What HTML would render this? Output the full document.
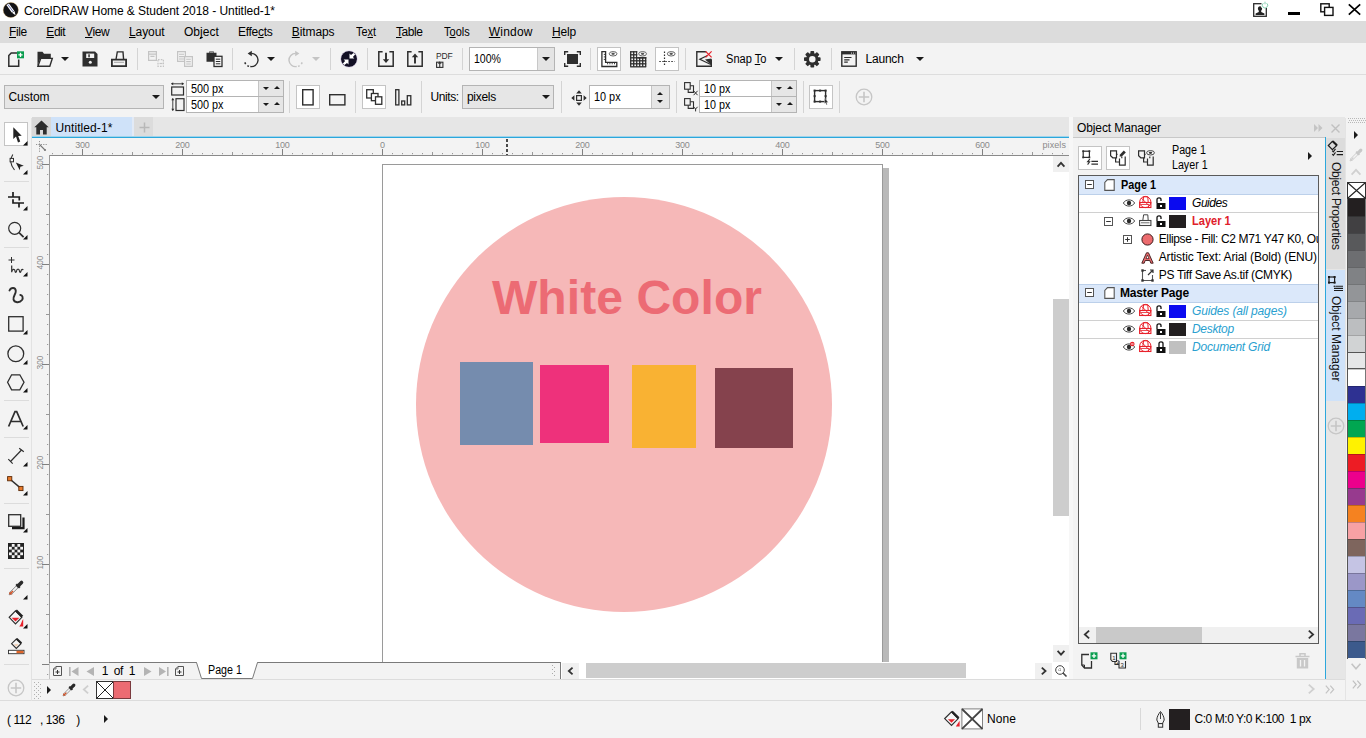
<!DOCTYPE html>
<html><head><meta charset="utf-8"><title>CorelDRAW Home &amp; Student 2018 - Untitled-1*</title>
<style>
html,body{margin:0;padding:0;}
body{width:1366px;height:738px;overflow:hidden;position:relative;background:#f3f3f3;font-family:"Liberation Sans",sans-serif;font-size:12px;color:#000;}
.a{position:absolute;display:block;}
.t{white-space:pre;}
u{text-decoration:underline;text-underline-offset:1px;text-decoration-skip-ink:none;}
svg{overflow:visible;}
</style></head><body>
<div class="a" style="left:0px;top:0px;width:1366px;height:21px;background:#ffffff;"></div>
<div class="a" style="left:0px;top:21px;width:1366px;height:22px;background:#dcdcdc;"></div>
<div class="a" style="left:0px;top:43px;width:1366px;height:32px;background:#f3f3f3;"></div>
<div class="a" style="left:0px;top:74px;width:1366px;height:1px;background:#dddddd;"></div>
<div class="a" style="left:0px;top:75px;width:1366px;height:42px;background:#f3f3f3;"></div>
<div class="a" style="left:0px;top:118px;width:32px;height:583px;background:#f3f3f3;"></div>
<div class="a" style="left:32px;top:117px;width:1041px;height:20px;background:#e6e6e6;"></div>
<div class="a" style="left:32px;top:117px;width:19px;height:20px;background:#d8d8d8;"></div>
<div class="a" style="left:51px;top:117px;width:81px;height:20px;background:#cfe2f9;"></div>
<div class="a" style="left:132px;top:117px;width:2px;height:20px;background:#e2eaf6;"></div>
<div class="a" style="left:134px;top:117px;width:19px;height:20px;background:#dcdcdc;"></div>
<div class="a" style="left:32px;top:136px;width:1037px;height:1px;background:#9fd3ea;"></div>
<div class="a" style="left:32px;top:137px;width:1037px;height:1px;background:#2ba7dc;"></div>
<div class="a" style="left:32px;top:138px;width:1037px;height:17px;background:#f3f3f3;"></div>
<div class="a" style="left:32px;top:155px;width:17px;height:524px;background:#f3f3f3;"></div>
<div class="a" style="left:49px;top:155px;width:1020px;height:507px;background:#ffffff;"></div>
<div class="a" style="left:49px;top:155px;width:1020px;height:1px;background:#8a8a8a;"></div>
<div class="a" style="left:49px;top:155px;width:1px;height:507px;background:#9a9a9a;"></div>
<div class="a" style="left:49px;top:662px;width:512px;height:1px;background:#7a7a7a;"></div>
<div class="a" style="left:560px;top:662px;width:1px;height:17px;background:#7a7a7a;"></div>
<div class="a" style="left:882px;top:168px;width:7px;height:494px;background:#b9b9b9;"></div>
<div class="a" style="left:382px;top:164px;width:501px;height:498px;background:#ffffff;border:1px solid #9a9a9a;box-sizing:border-box;border-bottom:none;"></div>
<div class="a" style="left:416px;top:197px;width:416px;height:415px;border-radius:50%;background:#f6b8b8;"></div>
<div class="a" style="left:460px;top:362px;width:73px;height:83px;background:#758cae;"></div>
<div class="a" style="left:540px;top:365px;width:69px;height:78px;background:#ee317b;"></div>
<div class="a" style="left:632px;top:365px;width:64px;height:83px;background:#f9b233;"></div>
<div class="a" style="left:715px;top:368px;width:78px;height:80px;background:#85424d;"></div>
<div class="a" style="left:1052px;top:156px;width:17px;height:507px;background:#ffffff;"></div>
<div class="a" style="left:1053px;top:156px;width:16px;height:16px;background:#f0f0f0;"></div>
<div class="a" style="left:1053px;top:299px;width:16px;height:217px;background:#cdcdcd;"></div>
<div class="a" style="left:1053px;top:645px;width:16px;height:17px;background:#f0f0f0;"></div>
<div class="a" style="left:50px;top:663px;width:510px;height:16px;background:#f3f3f3;"></div>
<div class="a" style="left:49px;top:663px;width:1px;height:16px;background:#c4c4c4;"></div>
<div class="a" style="left:561px;top:662px;width:508px;height:17px;background:#ffffff;"></div>
<div class="a" style="left:562px;top:663px;width:17px;height:16px;background:#f0f0f0;"></div>
<div class="a" style="left:1035px;top:663px;width:17px;height:16px;background:#f0f0f0;"></div>
<div class="a" style="left:586px;top:663px;width:380px;height:15px;background:#cdcdcd;"></div>
<div class="a" style="left:32px;top:679px;width:1313px;height:1px;background:#dcdcdc;"></div>
<div class="a" style="left:32px;top:680px;width:1313px;height:20px;background:#f3f3f3;"></div>
<div class="a" style="left:0px;top:700px;width:1366px;height:1px;background:#dcdcdc;"></div>
<div class="a" style="left:0px;top:701px;width:1366px;height:37px;background:#f3f3f3;"></div>
<div class="a" style="left:1069px;top:117px;width:4px;height:562px;background:#f7f7f7;"></div>
<div class="a" style="left:1073px;top:117px;width:272px;height:21px;background:#e6e6e6;"></div>
<div class="a" style="left:1073px;top:137px;width:252px;height:1px;background:#c8c8c8;"></div>
<div class="a" style="left:1073px;top:138px;width:252px;height:541px;background:#f3f3f3;"></div>
<div class="a" style="left:1325px;top:137px;width:1px;height:542px;background:#2ba7dc;"></div>
<div class="a" style="left:1326px;top:138px;width:19px;height:541px;background:#e6e6e6;"></div>
<div class="a" style="left:1326px;top:138px;width:19px;height:131px;background:#dcdcdc;"></div>
<div class="a" style="left:1326px;top:270px;width:19px;height:131px;background:#cfe2f9;"></div>
<div class="a" style="left:1345px;top:118px;width:1px;height:582px;background:#e4e4e4;"></div>
<div class="a" style="left:1346px;top:118px;width:20px;height:582px;background:#f3f3f3;"></div>
<div class="a" style="left:1078px;top:175px;width:241px;height:469px;background:#ffffff;border:1px solid #5a5a5a;box-sizing:border-box;"></div>
<div class="a" style="left:1079px;top:176px;width:239px;height:18px;background:#dbe8fa;"></div>
<div class="a" style="left:1079px;top:284px;width:239px;height:18px;background:#dbe8fa;"></div>
<div class="a" style="left:1079px;top:194px;width:239px;height:1px;background:#d0d0d0;"></div>
<div class="a" style="left:1079px;top:212px;width:239px;height:1px;background:#d0d0d0;"></div>
<div class="a" style="left:1079px;top:302px;width:239px;height:1px;background:#d0d0d0;"></div>
<div class="a" style="left:1079px;top:320px;width:239px;height:1px;background:#d0d0d0;"></div>
<div class="a" style="left:1079px;top:338px;width:239px;height:1px;background:#d0d0d0;"></div>
<div class="a" style="left:1079px;top:194px;width:239px;height:1px;background:#bcd0ea;"></div>
<div class="a" style="left:1079px;top:284px;width:239px;height:1px;background:#bcd0ea;"></div>
<div class="a" style="left:1079px;top:302px;width:239px;height:1px;background:#bcd0ea;"></div>
<div class="a" style="left:1079px;top:627px;width:239px;height:16px;background:#f0f0f0;"></div>
<div class="a" style="left:1096px;top:627px;width:106px;height:16px;background:#c9c9c9;"></div>
<div class="a" style="left:1347px;top:182px;width:19px;height:17px;background:#ffffff;border:1px solid #333;box-sizing:border-box;"></div>
<div class="a" style="left:1348px;top:199px;width:17px;height:17px;background:#231f20;"></div>
<div class="a" style="left:1348px;top:216px;width:17px;height:17px;background:#414042;"></div>
<div class="a" style="left:1348px;top:216px;width:17px;height:1px;background:rgba(0,0,0,0.220);"></div>
<div class="a" style="left:1348px;top:233px;width:17px;height:17px;background:#58595b;"></div>
<div class="a" style="left:1348px;top:233px;width:17px;height:1px;background:rgba(0,0,0,0.220);"></div>
<div class="a" style="left:1348px;top:250px;width:17px;height:17px;background:#6d6e71;"></div>
<div class="a" style="left:1348px;top:250px;width:17px;height:1px;background:rgba(0,0,0,0.220);"></div>
<div class="a" style="left:1348px;top:267px;width:17px;height:17px;background:#808285;"></div>
<div class="a" style="left:1348px;top:267px;width:17px;height:1px;background:rgba(0,0,0,0.220);"></div>
<div class="a" style="left:1348px;top:284px;width:17px;height:17px;background:#939598;"></div>
<div class="a" style="left:1348px;top:284px;width:17px;height:1px;background:rgba(0,0,0,0.220);"></div>
<div class="a" style="left:1348px;top:301px;width:17px;height:17px;background:#a7a9ac;"></div>
<div class="a" style="left:1348px;top:301px;width:17px;height:1px;background:rgba(0,0,0,0.220);"></div>
<div class="a" style="left:1348px;top:318px;width:17px;height:17px;background:#bcbec0;"></div>
<div class="a" style="left:1348px;top:318px;width:17px;height:1px;background:rgba(0,0,0,0.220);"></div>
<div class="a" style="left:1348px;top:335px;width:17px;height:17px;background:#d1d3d4;"></div>
<div class="a" style="left:1348px;top:335px;width:17px;height:1px;background:rgba(0,0,0,0.220);"></div>
<div class="a" style="left:1348px;top:352px;width:17px;height:17px;background:#e6e7e8;"></div>
<div class="a" style="left:1348px;top:352px;width:17px;height:1px;background:rgba(0,0,0,0.220);"></div>
<div class="a" style="left:1348px;top:369px;width:17px;height:17px;background:#ffffff;"></div>
<div class="a" style="left:1348px;top:369px;width:17px;height:1px;background:rgba(0,0,0,0.220);"></div>
<div class="a" style="left:1348px;top:386px;width:17px;height:17px;background:#2e3192;"></div>
<div class="a" style="left:1348px;top:386px;width:17px;height:1px;background:rgba(0,0,0,0.220);"></div>
<div class="a" style="left:1348px;top:403px;width:17px;height:17px;background:#00aeef;"></div>
<div class="a" style="left:1348px;top:403px;width:17px;height:1px;background:rgba(0,0,0,0.220);"></div>
<div class="a" style="left:1348px;top:420px;width:17px;height:17px;background:#00a651;"></div>
<div class="a" style="left:1348px;top:420px;width:17px;height:1px;background:rgba(0,0,0,0.220);"></div>
<div class="a" style="left:1348px;top:437px;width:17px;height:17px;background:#fff200;"></div>
<div class="a" style="left:1348px;top:437px;width:17px;height:1px;background:rgba(0,0,0,0.220);"></div>
<div class="a" style="left:1348px;top:454px;width:17px;height:17px;background:#ed1c24;"></div>
<div class="a" style="left:1348px;top:454px;width:17px;height:1px;background:rgba(0,0,0,0.220);"></div>
<div class="a" style="left:1348px;top:471px;width:17px;height:17px;background:#ec008c;"></div>
<div class="a" style="left:1348px;top:471px;width:17px;height:1px;background:rgba(0,0,0,0.220);"></div>
<div class="a" style="left:1348px;top:488px;width:17px;height:17px;background:#973a8e;"></div>
<div class="a" style="left:1348px;top:488px;width:17px;height:1px;background:rgba(0,0,0,0.220);"></div>
<div class="a" style="left:1348px;top:505px;width:17px;height:17px;background:#f58220;"></div>
<div class="a" style="left:1348px;top:505px;width:17px;height:1px;background:rgba(0,0,0,0.220);"></div>
<div class="a" style="left:1348px;top:522px;width:17px;height:17px;background:#f7a1a4;"></div>
<div class="a" style="left:1348px;top:522px;width:17px;height:1px;background:rgba(0,0,0,0.220);"></div>
<div class="a" style="left:1348px;top:539px;width:17px;height:17px;background:#7e655d;"></div>
<div class="a" style="left:1348px;top:539px;width:17px;height:1px;background:rgba(0,0,0,0.220);"></div>
<div class="a" style="left:1348px;top:556px;width:17px;height:17px;background:#c5c4e4;"></div>
<div class="a" style="left:1348px;top:556px;width:17px;height:1px;background:rgba(0,0,0,0.220);"></div>
<div class="a" style="left:1348px;top:573px;width:17px;height:17px;background:#9b97c8;"></div>
<div class="a" style="left:1348px;top:573px;width:17px;height:1px;background:rgba(0,0,0,0.220);"></div>
<div class="a" style="left:1348px;top:590px;width:17px;height:17px;background:#6489c4;"></div>
<div class="a" style="left:1348px;top:590px;width:17px;height:1px;background:rgba(0,0,0,0.220);"></div>
<div class="a" style="left:1348px;top:607px;width:17px;height:17px;background:#6a6bb5;"></div>
<div class="a" style="left:1348px;top:607px;width:17px;height:1px;background:rgba(0,0,0,0.220);"></div>
<div class="a" style="left:1348px;top:624px;width:17px;height:17px;background:#7a779f;"></div>
<div class="a" style="left:1348px;top:624px;width:17px;height:1px;background:rgba(0,0,0,0.220);"></div>
<div class="a" style="left:1348px;top:641px;width:17px;height:17px;background:#3c5a8c;"></div>
<div class="a" style="left:1348px;top:641px;width:17px;height:1px;background:rgba(0,0,0,0.220);"></div>
<div class="a" style="left:1347px;top:352px;width:19px;height:17px;background:#e6e7e8;border:1px solid #555;box-sizing:border-box;"></div>
<div class="a" style="left:1347px;top:199px;width:1px;height:460px;background:#555;"></div>
<div class="a" style="left:1365px;top:199px;width:1px;height:460px;background:#777;"></div>
<svg class="a" style="left:3px;top:2px;" width="16" height="16" viewBox="0 0 16 16"><circle cx="7.800" cy="8" r="7.600" fill="#131316"/><circle cx="7.800" cy="8" r="7.600" fill="none" stroke="#d8a040" stroke-width="0.500" opacity="0.600"/><path d="M3.400,2.900L5.900,1.500L11.200,8.700L8.700,10.400Z" fill="#ffffff"/><path d="M9,10.800L11.500,9.100L12.600,13.300Z" fill="#ffffff"/><path d="M4.800,2.400L10,9.500" stroke="#4a55a0" stroke-width="0.800"/></svg>
<svg class="a" style="left:1253px;top:3px;" width="16" height="15" viewBox="0 0 16 15"><rect x="0.7" y="0.7" width="12.6" height="12.6" fill="#fff" stroke="#2a2a2a" stroke-width="1.3"/><path d="M7,3.2c1.3,0,2.1,1,2.1,2.3c0,1-0.5,1.8-0.9,2.3v1.2l3.2,1.4v1.6H2.6v-1.6l3.2-1.4V7.8C5.4,7.3,4.9,6.500,4.9,5.500C4.9,4.200,5.700,3.200,7,3.200Z" fill="#222"/><rect x="8.5" y="-1.5" width="7" height="6.5" fill="#fff"/><path d="M10.3,0.2a2.7,2.7,0,1,0,3.400,0" fill="none" stroke="#7ac9a8" stroke-width="0.9"/><path d="M12,-1.3v2.600" stroke="#7ac9a8" stroke-width="0.9"/></svg>
<div class="a" style="left:1288px;top:11.5px;width:11.5px;height:3.3px;background:#000;"></div>
<svg class="a" style="left:1320px;top:3px;" width="14" height="14" viewBox="0 0 14 14"><rect x="0.8" y="0.8" width="8.4" height="8" fill="#fff" stroke="#111" stroke-width="1.4"/><rect x="4.600" y="4.400" width="8.400" height="8" fill="#fff" stroke="#111" stroke-width="1.4"/></svg>
<svg class="a" style="left:1348px;top:4px;" width="13" height="11" viewBox="0 0 13 11"><path d="M0.8,0.3L12.2,10.7M12.2,0.3L0.8,10.7" stroke="#000" stroke-width="1.7"/></svg>
<svg class="a" style="left:8px;top:51px;" width="16" height="16" viewBox="0 0 16 16"><path d="M9,2H3.200L0.800,4.600V15.200H10.700V8.500" fill="none" stroke="#2e2e2e" stroke-width="1.5"/><rect x="9" y="0.3" width="7" height="7" fill="#0a9d4f"/><path d="M10.4,3.800h4.200M12.500,1.700v4.200" stroke="#fff" stroke-width="1.3"/></svg>
<svg class="a" style="left:37px;top:51px;" width="16" height="16" viewBox="0 0 16 16"><path d="M0.500,0.800H5.500L7,2.800H13.800V7H3.400L0.500,15Z" fill="#2e2e2e"/><path d="M3.700,7.400H15.300L12.800,15.200H0.900Z" fill="#f3f3f3" stroke="#2e2e2e" stroke-width="1.400"/></svg>
<svg class="a" style="left:61px;top:57px;" width="8" height="4" viewBox="0 0 8 4"><path d="M0,0H8L4.0,4Z" fill="#1a1a1a"/></svg>
<svg class="a" style="left:82px;top:51px;" width="16" height="16" viewBox="0 0 16 16"><path d="M0.500,0.500H13L15.500,3V15.500H0.500Z" fill="#2e2e2e"/><rect x="4.200" y="2.600" width="8" height="4.400" fill="#f3f3f3"/><rect x="6.300" y="3.300" width="1.500" height="3" fill="#2e2e2e"/><circle cx="8.300" cy="11.300" r="1.500" fill="#f3f3f3"/></svg>
<svg class="a" style="left:111px;top:51px;" width="16" height="16" viewBox="0 0 16 16"><path d="M5,8.500L6.300,0.900H12L12.600,8.500" fill="none" stroke="#2e2e2e" stroke-width="1.400"/><path d="M0.900,8.700H15.100V15.100H0.900Z" fill="none" stroke="#2e2e2e" stroke-width="1.800"/><path d="M3,11.300H13" stroke="#2e2e2e" stroke-width="0.800" opacity="0.500"/></svg>
<div class="a" style="left:137px;top:48px;width:1px;height:22px;background:#d4d4d4;"></div>
<svg class="a" style="left:148px;top:51px;" width="16" height="16" viewBox="0 0 16 16"><path d="M0.600,0.600H8.400V9.400H0.600ZM0.600,3.200H8.400M2.400,5.400H6.500" fill="none" stroke="#c4c4c4" stroke-width="1.200"/><path d="M10,8.600H15.400V15.400H10Z" fill="none" stroke="#c4c4c4" stroke-width="1.200" stroke-dasharray="1.600,1.200"/><path d="M11.500,12.500h3" stroke="#c4c4c4" stroke-width="1.200"/></svg>
<svg class="a" style="left:177px;top:51px;" width="16" height="16" viewBox="0 0 16 16"><path d="M0.600,0.600H8.400V10.400H0.600Z" fill="#f3f3f3" stroke="#c4c4c4" stroke-width="1.200"/><path d="M2,3.200h5M2,5.600h5M2,8h5" stroke="#c4c4c4" stroke-width="1.100"/><path d="M7.600,5.600H15.400V15.400H7.600Z" fill="#f3f3f3" stroke="#c4c4c4" stroke-width="1.200"/><path d="M9.200,8.200h4.600M9.200,10.600h4.600M9.200,13h4.600" stroke="#c4c4c4" stroke-width="1.100"/></svg>
<svg class="a" style="left:206px;top:51px;" width="16" height="16" viewBox="0 0 16 16"><path d="M0.500,1.800H3.200V0.400H7.800V1.800H10.500V10.800H0.500Z" fill="#2e2e2e"/><rect x="3.600" y="0.700" width="3.800" height="1.300" fill="#8a8a8a"/><rect x="8" y="5.300" width="8" height="10.200" fill="#f6f6f6" stroke="#2e2e2e" stroke-width="1.300"/><path d="M9.800,8.200h4.500M9.800,10.500h4.500M9.800,12.800h4.500" stroke="#2e2e2e" stroke-width="1"/></svg>
<div class="a" style="left:232px;top:48px;width:1px;height:22px;background:#d4d4d4;"></div>
<svg class="a" style="left:243px;top:51px;" width="16" height="16" viewBox="0 0 16 16"><g><path d="M8.200,2.400A6.600,6.600,0,1,1,7.300,15.500" fill="none" stroke="#2e2e2e" stroke-width="1.400"/><path d="M8.800,-0.300V5.300L4.600,2.500Z" fill="#2e2e2e"/><path d="M6,15.300A6.600,6.600,0,0,1,1.400,9.300" fill="none" stroke="#2e2e2e" stroke-width="1.500" stroke-dasharray="1.800,2.200"/></g></svg>
<svg class="a" style="left:267px;top:57px;" width="8" height="4" viewBox="0 0 8 4"><path d="M0,0H8L4.0,4Z" fill="#1a1a1a"/></svg>
<svg class="a" style="left:288px;top:51px;" width="16" height="16" viewBox="0 0 16 16"><g transform="translate(16,0) scale(-1,1)"><path d="M8.200,2.400A6.600,6.600,0,1,1,7.300,15.500" fill="none" stroke="#c4c4c4" stroke-width="1.400"/><path d="M8.800,-0.300V5.300L4.600,2.500Z" fill="#c4c4c4"/><path d="M6,15.300A6.600,6.600,0,0,1,1.400,9.300" fill="none" stroke="#c4c4c4" stroke-width="1.500" stroke-dasharray="1.800,2.200"/></g></svg>
<svg class="a" style="left:312px;top:57px;" width="8" height="4" viewBox="0 0 8 4"><path d="M0,0H8L4.0,4Z" fill="#c4c4c4"/></svg>
<div class="a" style="left:330px;top:48px;width:1px;height:22px;background:#d4d4d4;"></div>
<svg class="a" style="left:341px;top:51px;" width="17" height="17" viewBox="0 0 17 17"><circle cx="8" cy="8" r="8.100" fill="#120f24"/><circle cx="8" cy="8" r="8.300" fill="none" stroke="#c9b8e0" stroke-width="0.600" opacity="0.700"/><path d="M8.500,7.500V2.600L10,4.100L12.600,1.900L14.100,3.400L11.900,6L13.400,7.500Z" fill="#fff"/><path d="M7.500,8.500V13.400L6,11.900L3.400,14.100L1.900,12.600L4.100,10L2.600,8.500Z" fill="#fff"/></svg>
<div class="a" style="left:367px;top:48px;width:1px;height:22px;background:#d4d4d4;"></div>
<svg class="a" style="left:378px;top:51px;" width="16" height="16" viewBox="0 0 16 16"><path d="M4.600,0.800H0.800V15.200H15.200V0.800H11.400" fill="none" stroke="#2e2e2e" stroke-width="1.500"/><path d="M8,1.800V9.500" stroke="#2e2e2e" stroke-width="1.900"/><path d="M4.800,8.300H11.200L8,12Z" fill="#2e2e2e"/></svg>
<svg class="a" style="left:407px;top:51px;" width="16" height="16" viewBox="0 0 16 16"><path d="M4.600,0.800H0.800V15.200H15.200V0.800H11.400" fill="none" stroke="#2e2e2e" stroke-width="1.500"/><path d="M8,12.500V5" stroke="#2e2e2e" stroke-width="1.900"/><path d="M4.800,6.200H11.200L8,2.400Z" fill="#2e2e2e"/></svg>
<svg class="a" style="left:436px;top:60px;" width="8" height="8" viewBox="0 0 8 8"><rect x="0.600" y="2.200" width="6.300" height="5.200" fill="none" stroke="#2e2e2e" stroke-width="1.100"/><path d="M3.750,7V3.200" stroke="#2e2e2e" stroke-width="1.100"/><path d="M1.900,3.700H5.600L3.750,1.200Z" fill="#2e2e2e"/></svg>
<div class="a" style="left:462px;top:48px;width:1px;height:22px;background:#d4d4d4;"></div>
<div class="a" style="left:469px;top:47px;width:86px;height:24px;background:#ffffff;border:1px solid #b4b4b4;box-sizing:border-box;"></div>
<div class="a" style="left:537px;top:48px;width:17px;height:22px;background:#e4e4e4;"></div>
<div class="a" style="left:537px;top:48px;width:1px;height:22px;background:#c8c8c8;"></div>
<svg class="a" style="left:542px;top:57px;" width="8" height="4" viewBox="0 0 8 4"><path d="M0,0H8L4.0,4Z" fill="#1a1a1a"/></svg>
<svg class="a" style="left:564px;top:51px;" width="17" height="16" viewBox="0 0 17 16"><rect x="3" y="3" width="11" height="10" fill="#2e2e2e"/><path d="M0.700,4V0.700H4.200M12.800,0.700H16.300V4M16.300,12V15.300H12.800M4.200,15.300H0.700V12" fill="none" stroke="#2e2e2e" stroke-width="1.400"/></svg>
<div class="a" style="left:590px;top:48px;width:1px;height:22px;background:#d4d4d4;"></div>
<div class="a" style="left:597px;top:47px;width:24px;height:24px;background:#ffffff;border:1px solid #c4c4c4;box-sizing:border-box;"></div>
<svg class="a" style="left:601px;top:51px;" width="17" height="16" viewBox="0 0 17 16"><path d="M0.900,0.700H4.600V11.400H15.800V15.500H0.900Z" fill="#fff" stroke="#2e2e2e" stroke-width="1.300"/><path d="M2.800,3.400h1.800M2.800,5.900h1.800M2.800,8.400h1.800M6.600,11.400v1.900M8.900,11.400v1.900M11.200,11.400v1.900M13.500,11.400v1.900" stroke="#2e2e2e" stroke-width="0.900"/><ellipse cx="12.1" cy="2.8" rx="3.900" ry="2.200" fill="#fafafa" stroke="#555" stroke-width="0.9"/><ellipse cx="12.1" cy="2.8" rx="1.700" ry="1.100" fill="#555"/></svg>
<svg class="a" style="left:630px;top:51px;" width="17" height="16" viewBox="0 0 17 16"><path d="M0.7,0.200V15.800" stroke="#2e2e2e" stroke-width="1.300"/><path d="M3.7,0.200V15.800" stroke="#2e2e2e" stroke-width="1.300"/><path d="M6.7,0.200V15.800" stroke="#2e2e2e" stroke-width="1.300"/><path d="M9.7,0.200V15.800" stroke="#2e2e2e" stroke-width="1.300"/><path d="M12.7,0.200V15.800" stroke="#2e2e2e" stroke-width="1.300"/><path d="M15.7,0.200V15.800" stroke="#2e2e2e" stroke-width="1.300"/><path d="M0.200,0.8H16.200" stroke="#2e2e2e" stroke-width="1.300"/><path d="M0.200,3.8H16.200" stroke="#2e2e2e" stroke-width="1.300"/><path d="M0.200,6.8H16.200" stroke="#2e2e2e" stroke-width="1.300"/><path d="M0.200,9.8H16.200" stroke="#2e2e2e" stroke-width="1.300"/><path d="M0.200,12.8H16.200" stroke="#2e2e2e" stroke-width="1.300"/><path d="M0.200,15.8H16.200" stroke="#2e2e2e" stroke-width="1.300"/><rect x="7.400" y="-0.500" width="10" height="6.600" fill="#f3f3f3"/><path d="M7.400,6.800H16.200" stroke="#2e2e2e" stroke-width="1.300"/><ellipse cx="12.6" cy="2.8" rx="3.900" ry="2.200" fill="#fafafa" stroke="#555" stroke-width="0.9"/><ellipse cx="12.6" cy="2.8" rx="1.700" ry="1.100" fill="#555"/></svg>
<div class="a" style="left:655px;top:47px;width:24px;height:24px;background:#ffffff;border:1px solid #c4c4c4;box-sizing:border-box;"></div>
<svg class="a" style="left:659px;top:51px;" width="17" height="16" viewBox="0 0 17 16"><path d="M5.500,0.500V15.500" stroke="#2e2e2e" stroke-width="1.200" stroke-dasharray="1.500,1.500"/><path d="M0.300,10.500H15.700" stroke="#2e2e2e" stroke-width="1.200" stroke-dasharray="1.500,1.500"/><ellipse cx="12.2" cy="2.8" rx="3.900" ry="2.200" fill="#fafafa" stroke="#555" stroke-width="0.9"/><ellipse cx="12.2" cy="2.8" rx="1.700" ry="1.100" fill="#555"/></svg>
<div class="a" style="left:685px;top:48px;width:1px;height:22px;background:#d4d4d4;"></div>
<svg class="a" style="left:696px;top:51px;" width="17" height="16" viewBox="0 0 17 16"><path d="M10.300,0.800H0.800V15.200H15.300V8.200" fill="none" stroke="#2e2e2e" stroke-width="1.400"/><path d="M11.500,4.500L3.800,8.300L14.800,13.500" fill="none" stroke="#2e2e2e" stroke-width="1.200"/><path d="M9,8.600L15.300,7.600V14Z" fill="#2e2e2e"/><path d="M9.600,0.300L15.600,6.300M15.600,0.300L9.600,6.300" stroke="#e8212b" stroke-width="1.200"/></svg>
<svg class="a" style="left:775px;top:57px;" width="8" height="4" viewBox="0 0 8 4"><path d="M0,0H8L4.0,4Z" fill="#1a1a1a"/></svg>
<div class="a" style="left:794px;top:48px;width:1px;height:22px;background:#d4d4d4;"></div>
<svg class="a" style="left:804px;top:51px;" width="17" height="17" viewBox="0 0 17 17"><g transform="translate(8.300,8.200)"><rect x="-1.900" y="-8.300" width="3.800" height="4" rx="0.800" fill="#2e2e2e" transform="rotate(0)"/><rect x="-1.900" y="-8.300" width="3.800" height="4" rx="0.800" fill="#2e2e2e" transform="rotate(45)"/><rect x="-1.900" y="-8.300" width="3.800" height="4" rx="0.800" fill="#2e2e2e" transform="rotate(90)"/><rect x="-1.900" y="-8.300" width="3.800" height="4" rx="0.800" fill="#2e2e2e" transform="rotate(135)"/><rect x="-1.900" y="-8.300" width="3.800" height="4" rx="0.800" fill="#2e2e2e" transform="rotate(180)"/><rect x="-1.900" y="-8.300" width="3.800" height="4" rx="0.800" fill="#2e2e2e" transform="rotate(225)"/><rect x="-1.900" y="-8.300" width="3.800" height="4" rx="0.800" fill="#2e2e2e" transform="rotate(270)"/><rect x="-1.900" y="-8.300" width="3.800" height="4" rx="0.800" fill="#2e2e2e" transform="rotate(315)"/><circle r="4.700" fill="none" stroke="#2e2e2e" stroke-width="2.900"/></g></svg>
<div class="a" style="left:831px;top:48px;width:1px;height:22px;background:#d4d4d4;"></div>
<svg class="a" style="left:841px;top:51px;" width="16" height="16" viewBox="0 0 16 16"><rect x="0.800" y="0.800" width="14.400" height="14.400" fill="#f3f3f3" stroke="#2e2e2e" stroke-width="1.400"/><rect x="0.800" y="0.800" width="14.400" height="2.600" fill="#2e2e2e"/><path d="M10,2.100h1M12,2.100h1M14,2.100h0.500" stroke="#fff" stroke-width="0.900"/><path d="M3.200,6.500h7.300M3.200,8.800h5.300M3.200,11.100h3.600" stroke="#2e2e2e" stroke-width="1.200"/></svg>
<svg class="a" style="left:916px;top:57px;" width="8" height="4" viewBox="0 0 8 4"><path d="M0,0H8L4.0,4Z" fill="#1a1a1a"/></svg>
<div class="a" style="left:4px;top:85px;width:160px;height:24px;background:#e6e6e6;border:1px solid #b4b4b4;box-sizing:border-box;"></div>
<svg class="a" style="left:152px;top:95px;" width="8" height="4" viewBox="0 0 8 4"><path d="M0,0H8L4.0,4Z" fill="#1a1a1a"/></svg>
<svg class="a" style="left:171px;top:82px;" width="14" height="14" viewBox="0 0 14 14"><path d="M0.500,1.800H12.500" stroke="#2e2e2e" stroke-width="0.9"/><path d="M0,1.800L2.200,0.300V3.300ZM13,1.800L10.800,0.300V3.300Z" fill="#2e2e2e"/><rect x="0.700" y="5" width="11.800" height="8" fill="none" stroke="#2e2e2e" stroke-width="1.200"/></svg>
<svg class="a" style="left:171px;top:98px;" width="14" height="14" viewBox="0 0 14 14"><path d="M1.800,0.500V12.500" stroke="#2e2e2e" stroke-width="0.9"/><path d="M1.800,0L0.300,2.200H3.300ZM1.800,13L0.300,10.800H3.300Z" fill="#2e2e2e"/><rect x="5" y="0.700" width="8" height="11.800" fill="none" stroke="#2e2e2e" stroke-width="1.200"/></svg>
<div class="a" style="left:186px;top:80px;width:97.5px;height:33px;background:#ffffff;border:1px solid #b4b4b4;box-sizing:border-box;"></div>
<div class="a" style="left:258px;top:81px;width:24.5px;height:31px;background:#e6e6e6;"></div>
<div class="a" style="left:258px;top:81px;width:1px;height:31px;background:#c4c4c4;"></div>
<div class="a" style="left:187px;top:96px;width:95.5px;height:1px;background:#b4b4b4;"></div>
<svg class="a" style="left:263px;top:87px;" width="6" height="3" viewBox="0 0 6 3"><path d="M0,0H6L3.0,3Z" fill="#1a1a1a"/></svg>
<svg class="a" style="left:274px;top:86px;" width="6" height="3" viewBox="0 0 6 3"><path d="M0,3H6L3.0,0Z" fill="#1a1a1a"/></svg>
<svg class="a" style="left:263px;top:103px;" width="6" height="3" viewBox="0 0 6 3"><path d="M0,0H6L3.0,3Z" fill="#1a1a1a"/></svg>
<svg class="a" style="left:274px;top:102px;" width="6" height="3" viewBox="0 0 6 3"><path d="M0,3H6L3.0,0Z" fill="#1a1a1a"/></svg>
<div class="a" style="left:289px;top:81px;width:1px;height:32px;background:#d4d4d4;"></div>
<div class="a" style="left:296px;top:85px;width:24px;height:24px;background:#ffffff;border:1px solid #c4c4c4;box-sizing:border-box;"></div>
<svg class="a" style="left:302px;top:89px;" width="12" height="17" viewBox="0 0 12 17"><rect x="0.700" y="0.700" width="10.400" height="15.200" fill="none" stroke="#2e2e2e" stroke-width="1.400"/></svg>
<svg class="a" style="left:329px;top:94px;" width="17" height="12" viewBox="0 0 17 12"><rect x="0.700" y="0.700" width="15.200" height="10.200" fill="none" stroke="#2e2e2e" stroke-width="1.400"/></svg>
<div class="a" style="left:355px;top:81px;width:1px;height:32px;background:#d4d4d4;"></div>
<div class="a" style="left:362px;top:85px;width:24px;height:24px;background:#ffffff;border:1px solid #c4c4c4;box-sizing:border-box;"></div>
<svg class="a" style="left:366px;top:89px;" width="17" height="17" viewBox="0 0 17 17"><rect x="0.700" y="0.700" width="6.600" height="8.300" fill="none" stroke="#2e2e2e" stroke-width="1.300"/><rect x="5.400" y="4.500" width="6.600" height="7.200" fill="#fff" stroke="#2e2e2e" stroke-width="1.300"/><rect x="9.500" y="7.800" width="6.300" height="7.500" fill="#fff" stroke="#2e2e2e" stroke-width="1.300"/></svg>
<svg class="a" style="left:395px;top:89px;" width="17" height="17" viewBox="0 0 17 17"><rect x="0.700" y="0.700" width="3.200" height="15.200" fill="none" stroke="#2e2e2e" stroke-width="1.300"/><rect x="6.700" y="12" width="3" height="3.900" fill="none" stroke="#2e2e2e" stroke-width="1.300"/><rect x="12.300" y="6.700" width="3.500" height="9.200" fill="none" stroke="#2e2e2e" stroke-width="1.300"/></svg>
<div class="a" style="left:421px;top:81px;width:1px;height:32px;background:#d4d4d4;"></div>
<div class="a" style="left:462px;top:85px;width:92px;height:24px;background:#e6e6e6;border:1px solid #b4b4b4;box-sizing:border-box;"></div>
<svg class="a" style="left:542px;top:95px;" width="8" height="4" viewBox="0 0 8 4"><path d="M0,0H8L4.0,4Z" fill="#1a1a1a"/></svg>
<div class="a" style="left:561px;top:81px;width:1px;height:32px;background:#d4d4d4;"></div>
<svg class="a" style="left:571px;top:90px;" width="16" height="16" viewBox="0 0 16 16"><rect x="5.600" y="5.600" width="4.800" height="4.800" fill="none" stroke="#2e2e2e" stroke-width="1.200"/><path d="M8,0.300L5.200,3.400H10.800ZM8,15.700L5.200,12.600H10.800ZM0.300,8L3.400,5.200V10.800ZM15.700,8L12.600,5.200V10.800Z" fill="#2e2e2e"/></svg>
<div class="a" style="left:589px;top:85px;width:81px;height:24px;background:#ffffff;border:1px solid #b4b4b4;box-sizing:border-box;"></div>
<div class="a" style="left:651px;top:86px;width:18px;height:22px;background:#e6e6e6;"></div>
<div class="a" style="left:651px;top:86px;width:1px;height:22px;background:#c4c4c4;"></div>
<svg class="a" style="left:657px;top:92px;" width="6" height="3" viewBox="0 0 6 3"><path d="M0,3H6L3.0,0Z" fill="#1a1a1a"/></svg>
<svg class="a" style="left:657px;top:100px;" width="6" height="3" viewBox="0 0 6 3"><path d="M0,0H6L3.0,3Z" fill="#1a1a1a"/></svg>
<div class="a" style="left:676px;top:81px;width:1px;height:32px;background:#d4d4d4;"></div>
<svg class="a" style="left:684px;top:82px;" width="14" height="14" viewBox="0 0 14 14"><rect x="0.600" y="0.600" width="5.600" height="6.600" fill="none" stroke="#2e2e2e" stroke-width="1.100"/><path d="M4.200,7.200V10.400H9.500V3.800H6.200" fill="none" stroke="#2e2e2e" stroke-width="1.100"/><path d="M9.600,8.800L13.600,13.200M13.600,8.800L9.600,13.200" stroke="#2e2e2e" stroke-width="1"/></svg>
<svg class="a" style="left:684px;top:98px;" width="14" height="14" viewBox="0 0 14 14"><rect x="0.600" y="0.600" width="5.600" height="6.600" fill="none" stroke="#2e2e2e" stroke-width="1.100"/><path d="M4.200,7.200V10.400H9.500V3.800H6.200" fill="none" stroke="#2e2e2e" stroke-width="1.100"/><path d="M9.600,8.800L11.600,11L13.600,8.800M11.600,11V13.400" stroke="#2e2e2e" stroke-width="1" fill="none"/></svg>
<div class="a" style="left:699px;top:80px;width:97.5px;height:33px;background:#ffffff;border:1px solid #b4b4b4;box-sizing:border-box;"></div>
<div class="a" style="left:771px;top:81px;width:24.5px;height:31px;background:#e6e6e6;"></div>
<div class="a" style="left:771px;top:81px;width:1px;height:31px;background:#c4c4c4;"></div>
<div class="a" style="left:700px;top:96px;width:95.5px;height:1px;background:#b4b4b4;"></div>
<svg class="a" style="left:776px;top:87px;" width="6" height="3" viewBox="0 0 6 3"><path d="M0,0H6L3.0,3Z" fill="#1a1a1a"/></svg>
<svg class="a" style="left:787px;top:86px;" width="6" height="3" viewBox="0 0 6 3"><path d="M0,3H6L3.0,0Z" fill="#1a1a1a"/></svg>
<svg class="a" style="left:776px;top:103px;" width="6" height="3" viewBox="0 0 6 3"><path d="M0,0H6L3.0,3Z" fill="#1a1a1a"/></svg>
<svg class="a" style="left:787px;top:102px;" width="6" height="3" viewBox="0 0 6 3"><path d="M0,3H6L3.0,0Z" fill="#1a1a1a"/></svg>
<div class="a" style="left:803px;top:81px;width:1px;height:32px;background:#d4d4d4;"></div>
<div class="a" style="left:809px;top:85px;width:24px;height:24px;background:#ffffff;border:1px solid #c4c4c4;box-sizing:border-box;"></div>
<svg class="a" style="left:813px;top:89px;" width="17" height="17" viewBox="0 0 17 17"><rect x="1.600" y="1.600" width="11" height="11" fill="none" stroke="#2e2e2e" stroke-width="1.400"/><rect x="0.6000000000000001" y="0.6000000000000001" width="2" height="2" fill="#2e2e2e"/><rect x="0.6000000000000001" y="6.1" width="2" height="2" fill="#2e2e2e"/><rect x="0.6000000000000001" y="11.6" width="2" height="2" fill="#2e2e2e"/><rect x="6.1" y="0.6000000000000001" width="2" height="2" fill="#2e2e2e"/><rect x="6.1" y="11.6" width="2" height="2" fill="#2e2e2e"/><rect x="11.6" y="0.6000000000000001" width="2" height="2" fill="#2e2e2e"/><rect x="11.6" y="6.1" width="2" height="2" fill="#2e2e2e"/><rect x="11.6" y="11.6" width="2" height="2" fill="#2e2e2e"/><path d="M11.500,9L15.300,13.200L13.600,13.400L14.300,15.600L13.300,15.900L12.600,13.800L11.500,14.800Z" fill="#2e2e2e" stroke="#fff" stroke-width="0.400"/></svg>
<div class="a" style="left:839px;top:81px;width:1px;height:32px;background:#d4d4d4;"></div>
<svg class="a" style="left:854.5px;top:88px;" width="18" height="18" viewBox="0 0 18 18"><circle cx="9" cy="9" r="7.800" fill="none" stroke="#c6c6c6" stroke-width="1.300"/><path d="M3.800,9H14.200M9,3.800V14.200" stroke="#c6c6c6" stroke-width="1.600"/></svg>
<svg class="a" style="left:34px;top:120px;" width="15" height="15" viewBox="0 0 15 15"><path d="M7.500,0.500L0.300,7.300H2.300V14.500H6V10H9V14.500H12.700V7.300H14.700Z" fill="#2e2e2e"/></svg>
<svg class="a" style="left:139px;top:122px;" width="11" height="11" viewBox="0 0 11 11"><path d="M0.500,5.500H10.500M5.500,0.500V10.500" stroke="#b8b8b8" stroke-width="1.500"/></svg>
<svg class="a" style="left:36px;top:141px;" width="11" height="11" viewBox="0 0 11 11"><path d="M3.500,0V11M0,3.500H11" stroke="#8a8a8a" stroke-width="0.9" stroke-dasharray="1.200,1.200"/><path d="M3.500,3.500L9,9" stroke="#777" stroke-width="1.100"/><circle cx="9" cy="9" r="1.100" fill="#777"/></svg>
<svg class="a" style="left:32px;top:138px;" width="1037" height="17" viewBox="0 0 1037 17"><rect x="20" y="15" width="1" height="1.200" fill="#9a9a9a"/><rect x="30" y="15" width="1" height="1.200" fill="#9a9a9a"/><rect x="40" y="15" width="1" height="1.200" fill="#9a9a9a"/><rect x="50" y="11" width="1" height="6" fill="#808080"/><rect x="60" y="15" width="1" height="1.200" fill="#9a9a9a"/><rect x="70" y="15" width="1" height="1.200" fill="#9a9a9a"/><rect x="80" y="15" width="1" height="1.200" fill="#9a9a9a"/><rect x="90" y="15" width="1" height="1.200" fill="#9a9a9a"/><rect x="100" y="14" width="1" height="3" fill="#999"/><rect x="110" y="15" width="1" height="1.200" fill="#9a9a9a"/><rect x="120" y="15" width="1" height="1.200" fill="#9a9a9a"/><rect x="130" y="15" width="1" height="1.200" fill="#9a9a9a"/><rect x="140" y="15" width="1" height="1.200" fill="#9a9a9a"/><rect x="150" y="11" width="1" height="6" fill="#808080"/><rect x="160" y="15" width="1" height="1.200" fill="#9a9a9a"/><rect x="170" y="15" width="1" height="1.200" fill="#9a9a9a"/><rect x="180" y="15" width="1" height="1.200" fill="#9a9a9a"/><rect x="190" y="15" width="1" height="1.200" fill="#9a9a9a"/><rect x="200" y="14" width="1" height="3" fill="#999"/><rect x="210" y="15" width="1" height="1.200" fill="#9a9a9a"/><rect x="220" y="15" width="1" height="1.200" fill="#9a9a9a"/><rect x="230" y="15" width="1" height="1.200" fill="#9a9a9a"/><rect x="240" y="15" width="1" height="1.200" fill="#9a9a9a"/><rect x="250" y="11" width="1" height="6" fill="#808080"/><rect x="260" y="15" width="1" height="1.200" fill="#9a9a9a"/><rect x="270" y="15" width="1" height="1.200" fill="#9a9a9a"/><rect x="280" y="15" width="1" height="1.200" fill="#9a9a9a"/><rect x="290" y="15" width="1" height="1.200" fill="#9a9a9a"/><rect x="300" y="14" width="1" height="3" fill="#999"/><rect x="310" y="15" width="1" height="1.200" fill="#9a9a9a"/><rect x="320" y="15" width="1" height="1.200" fill="#9a9a9a"/><rect x="330" y="15" width="1" height="1.200" fill="#9a9a9a"/><rect x="340" y="15" width="1" height="1.200" fill="#9a9a9a"/><rect x="350" y="11" width="1" height="6" fill="#808080"/><rect x="360" y="15" width="1" height="1.200" fill="#9a9a9a"/><rect x="370" y="15" width="1" height="1.200" fill="#9a9a9a"/><rect x="380" y="15" width="1" height="1.200" fill="#9a9a9a"/><rect x="390" y="15" width="1" height="1.200" fill="#9a9a9a"/><rect x="400" y="14" width="1" height="3" fill="#999"/><rect x="410" y="15" width="1" height="1.200" fill="#9a9a9a"/><rect x="420" y="15" width="1" height="1.200" fill="#9a9a9a"/><rect x="430" y="15" width="1" height="1.200" fill="#9a9a9a"/><rect x="440" y="15" width="1" height="1.200" fill="#9a9a9a"/><rect x="450" y="11" width="1" height="6" fill="#808080"/><rect x="460" y="15" width="1" height="1.200" fill="#9a9a9a"/><rect x="470" y="15" width="1" height="1.200" fill="#9a9a9a"/><rect x="480" y="15" width="1" height="1.200" fill="#9a9a9a"/><rect x="490" y="15" width="1" height="1.200" fill="#9a9a9a"/><rect x="500" y="14" width="1" height="3" fill="#999"/><rect x="510" y="15" width="1" height="1.200" fill="#9a9a9a"/><rect x="520" y="15" width="1" height="1.200" fill="#9a9a9a"/><rect x="530" y="15" width="1" height="1.200" fill="#9a9a9a"/><rect x="540" y="15" width="1" height="1.200" fill="#9a9a9a"/><rect x="550" y="11" width="1" height="6" fill="#808080"/><rect x="560" y="15" width="1" height="1.200" fill="#9a9a9a"/><rect x="570" y="15" width="1" height="1.200" fill="#9a9a9a"/><rect x="580" y="15" width="1" height="1.200" fill="#9a9a9a"/><rect x="590" y="15" width="1" height="1.200" fill="#9a9a9a"/><rect x="600" y="14" width="1" height="3" fill="#999"/><rect x="610" y="15" width="1" height="1.200" fill="#9a9a9a"/><rect x="620" y="15" width="1" height="1.200" fill="#9a9a9a"/><rect x="630" y="15" width="1" height="1.200" fill="#9a9a9a"/><rect x="640" y="15" width="1" height="1.200" fill="#9a9a9a"/><rect x="650" y="11" width="1" height="6" fill="#808080"/><rect x="660" y="15" width="1" height="1.200" fill="#9a9a9a"/><rect x="670" y="15" width="1" height="1.200" fill="#9a9a9a"/><rect x="680" y="15" width="1" height="1.200" fill="#9a9a9a"/><rect x="690" y="15" width="1" height="1.200" fill="#9a9a9a"/><rect x="700" y="14" width="1" height="3" fill="#999"/><rect x="710" y="15" width="1" height="1.200" fill="#9a9a9a"/><rect x="720" y="15" width="1" height="1.200" fill="#9a9a9a"/><rect x="730" y="15" width="1" height="1.200" fill="#9a9a9a"/><rect x="740" y="15" width="1" height="1.200" fill="#9a9a9a"/><rect x="750" y="11" width="1" height="6" fill="#808080"/><rect x="760" y="15" width="1" height="1.200" fill="#9a9a9a"/><rect x="770" y="15" width="1" height="1.200" fill="#9a9a9a"/><rect x="780" y="15" width="1" height="1.200" fill="#9a9a9a"/><rect x="790" y="15" width="1" height="1.200" fill="#9a9a9a"/><rect x="800" y="14" width="1" height="3" fill="#999"/><rect x="810" y="15" width="1" height="1.200" fill="#9a9a9a"/><rect x="820" y="15" width="1" height="1.200" fill="#9a9a9a"/><rect x="830" y="15" width="1" height="1.200" fill="#9a9a9a"/><rect x="840" y="15" width="1" height="1.200" fill="#9a9a9a"/><rect x="850" y="11" width="1" height="6" fill="#808080"/><rect x="860" y="15" width="1" height="1.200" fill="#9a9a9a"/><rect x="870" y="15" width="1" height="1.200" fill="#9a9a9a"/><rect x="880" y="15" width="1" height="1.200" fill="#9a9a9a"/><rect x="890" y="15" width="1" height="1.200" fill="#9a9a9a"/><rect x="900" y="14" width="1" height="3" fill="#999"/><rect x="910" y="15" width="1" height="1.200" fill="#9a9a9a"/><rect x="920" y="15" width="1" height="1.200" fill="#9a9a9a"/><rect x="930" y="15" width="1" height="1.200" fill="#9a9a9a"/><rect x="940" y="15" width="1" height="1.200" fill="#9a9a9a"/><rect x="950" y="11" width="1" height="6" fill="#808080"/><rect x="960" y="15" width="1" height="1.200" fill="#9a9a9a"/><rect x="970" y="15" width="1" height="1.200" fill="#9a9a9a"/><rect x="980" y="15" width="1" height="1.200" fill="#9a9a9a"/><rect x="990" y="15" width="1" height="1.200" fill="#9a9a9a"/><rect x="1000" y="14" width="1" height="3" fill="#999"/><rect x="1010" y="15" width="1" height="1.200" fill="#9a9a9a"/><rect x="1020" y="15" width="1" height="1.200" fill="#9a9a9a"/><rect x="1030" y="15" width="1" height="1.200" fill="#9a9a9a"/></svg>
<svg class="a" style="left:506px;top:139px;" width="2" height="16" viewBox="0 0 2 16"><path d="M1,0V16" stroke="#000" stroke-width="1.400" stroke-dasharray="3,2"/></svg>
<svg class="a" style="left:32px;top:155px;" width="17" height="524" viewBox="0 0 17 524"><rect x="10" y="9" width="7" height="1" fill="#808080"/><rect x="15" y="19" width="1.200" height="1" fill="#9a9a9a"/><rect x="15" y="29" width="1.200" height="1" fill="#9a9a9a"/><rect x="15" y="39" width="1.200" height="1" fill="#9a9a9a"/><rect x="15" y="49" width="1.200" height="1" fill="#9a9a9a"/><rect x="14" y="59" width="3" height="1" fill="#999"/><rect x="15" y="69" width="1.200" height="1" fill="#9a9a9a"/><rect x="15" y="79" width="1.200" height="1" fill="#9a9a9a"/><rect x="15" y="89" width="1.200" height="1" fill="#9a9a9a"/><rect x="15" y="99" width="1.200" height="1" fill="#9a9a9a"/><rect x="10" y="109" width="7" height="1" fill="#808080"/><rect x="15" y="119" width="1.200" height="1" fill="#9a9a9a"/><rect x="15" y="129" width="1.200" height="1" fill="#9a9a9a"/><rect x="15" y="139" width="1.200" height="1" fill="#9a9a9a"/><rect x="15" y="149" width="1.200" height="1" fill="#9a9a9a"/><rect x="14" y="159" width="3" height="1" fill="#999"/><rect x="15" y="169" width="1.200" height="1" fill="#9a9a9a"/><rect x="15" y="179" width="1.200" height="1" fill="#9a9a9a"/><rect x="15" y="189" width="1.200" height="1" fill="#9a9a9a"/><rect x="15" y="199" width="1.200" height="1" fill="#9a9a9a"/><rect x="10" y="209" width="7" height="1" fill="#808080"/><rect x="15" y="219" width="1.200" height="1" fill="#9a9a9a"/><rect x="15" y="229" width="1.200" height="1" fill="#9a9a9a"/><rect x="15" y="239" width="1.200" height="1" fill="#9a9a9a"/><rect x="15" y="249" width="1.200" height="1" fill="#9a9a9a"/><rect x="14" y="259" width="3" height="1" fill="#999"/><rect x="15" y="269" width="1.200" height="1" fill="#9a9a9a"/><rect x="15" y="279" width="1.200" height="1" fill="#9a9a9a"/><rect x="15" y="289" width="1.200" height="1" fill="#9a9a9a"/><rect x="15" y="299" width="1.200" height="1" fill="#9a9a9a"/><rect x="10" y="309" width="7" height="1" fill="#808080"/><rect x="15" y="319" width="1.200" height="1" fill="#9a9a9a"/><rect x="15" y="329" width="1.200" height="1" fill="#9a9a9a"/><rect x="15" y="339" width="1.200" height="1" fill="#9a9a9a"/><rect x="15" y="349" width="1.200" height="1" fill="#9a9a9a"/><rect x="14" y="359" width="3" height="1" fill="#999"/><rect x="15" y="369" width="1.200" height="1" fill="#9a9a9a"/><rect x="15" y="379" width="1.200" height="1" fill="#9a9a9a"/><rect x="15" y="389" width="1.200" height="1" fill="#9a9a9a"/><rect x="15" y="399" width="1.200" height="1" fill="#9a9a9a"/><rect x="10" y="409" width="7" height="1" fill="#808080"/><rect x="15" y="419" width="1.200" height="1" fill="#9a9a9a"/><rect x="15" y="429" width="1.200" height="1" fill="#9a9a9a"/><rect x="15" y="439" width="1.200" height="1" fill="#9a9a9a"/><rect x="15" y="449" width="1.200" height="1" fill="#9a9a9a"/><rect x="14" y="459" width="3" height="1" fill="#999"/><rect x="15" y="469" width="1.200" height="1" fill="#9a9a9a"/><rect x="15" y="479" width="1.200" height="1" fill="#9a9a9a"/><rect x="15" y="489" width="1.200" height="1" fill="#9a9a9a"/><rect x="15" y="499" width="1.200" height="1" fill="#9a9a9a"/><rect x="10" y="509" width="7" height="1" fill="#808080"/><rect x="15" y="519" width="1.200" height="1" fill="#9a9a9a"/><text x="0" y="0" font-size="9" fill="#8a8a8a" text-anchor="middle" textLength="14" lengthAdjust="spacingAndGlyphs" transform="translate(10.800,7.5) rotate(-90)">500</text><text x="0" y="0" font-size="9" fill="#8a8a8a" text-anchor="middle" textLength="14" lengthAdjust="spacingAndGlyphs" transform="translate(10.800,107.5) rotate(-90)">400</text><text x="0" y="0" font-size="9" fill="#8a8a8a" text-anchor="middle" textLength="14" lengthAdjust="spacingAndGlyphs" transform="translate(10.800,207.5) rotate(-90)">300</text><text x="0" y="0" font-size="9" fill="#8a8a8a" text-anchor="middle" textLength="14" lengthAdjust="spacingAndGlyphs" transform="translate(10.800,307.5) rotate(-90)">200</text><text x="0" y="0" font-size="9" fill="#8a8a8a" text-anchor="middle" textLength="14" lengthAdjust="spacingAndGlyphs" transform="translate(10.800,407.5) rotate(-90)">100</text></svg>
<div class="a" style="left:4px;top:122px;width:24px;height:24px;background:#ffffff;border:1px solid #c4c4c4;box-sizing:border-box;"></div>
<svg class="a" style="left:13px;top:127px;" width="9" height="16" viewBox="0 0 9 16"><path d="M0.300,0.300V12L3,9.600L5,15.400L7.200,14.500L5.200,8.900L8.700,8.700Z" fill="#222"/></svg>
<svg class="a" style="left:22.5px;top:140.5px;" width="4.5" height="4.5" viewBox="0 0 4.5 4.5"><path d="M4.500,0V4.500H0Z" fill="#111"/></svg>
<svg class="a" style="left:9px;top:154px;" width="18" height="19" viewBox="0 0 18 19"><path d="M3.800,0.500C0.800,5,1.500,11,5.500,16" fill="none" stroke="#2e2e2e" stroke-width="1.100"/><rect x="1.100" y="4.400" width="3.400" height="3.400" fill="#f3f3f3" stroke="#2e2e2e" stroke-width="1"/><path d="M6.800,8.500L14.800,11.800L11.300,12.800L10.800,16.200Z" fill="#222"/></svg>
<svg class="a" style="left:22.5px;top:169.5px;" width="4.5" height="4.5" viewBox="0 0 4.5 4.5"><path d="M4.500,0V4.500H0Z" fill="#111"/></svg>
<div class="a" style="left:4px;top:181px;width:25px;height:1px;background:#dcdcdc;"></div>
<svg class="a" style="left:8px;top:192px;" width="17" height="17" viewBox="0 0 17 17"><path d="M5,0V5M0,5H11.300V8.400M5,7.200V11H16M11,11V15.600" fill="none" stroke="#1c1c1c" stroke-width="1.700"/></svg>
<svg class="a" style="left:22.5px;top:206.0px;" width="4.5" height="4.5" viewBox="0 0 4.5 4.5"><path d="M4.500,0V4.500H0Z" fill="#111"/></svg>
<svg class="a" style="left:8px;top:222px;" width="17" height="17" viewBox="0 0 17 17"><circle cx="6.700" cy="6.300" r="6" fill="none" stroke="#2e2e2e" stroke-width="1.200"/><path d="M11,10.600L15.600,15.200" stroke="#2e2e2e" stroke-width="1.700"/></svg>
<svg class="a" style="left:22.5px;top:235.0px;" width="4.5" height="4.5" viewBox="0 0 4.5 4.5"><path d="M4.500,0V4.500H0Z" fill="#111"/></svg>
<div class="a" style="left:4px;top:247px;width:25px;height:1px;background:#dcdcdc;"></div>
<svg class="a" style="left:8px;top:257px;" width="19" height="18" viewBox="0 0 19 18"><path d="M3.500,0V6M0.500,3H6.500" stroke="#2e2e2e" stroke-width="1"/><path d="M3.700,8.500V15.200C4,11.500,6.800,11.500,7,14.200C7.200,15.800,8.200,15.800,8.500,14.200C8.800,11.500,11.300,11.500,11.500,14.200C11.700,15.800,12.700,15.800,13,14.200C13.200,12.500,14.300,12,15.300,13" fill="none" stroke="#2e2e2e" stroke-width="1.200"/></svg>
<svg class="a" style="left:22.5px;top:271.5px;" width="4.5" height="4.5" viewBox="0 0 4.5 4.5"><path d="M4.500,0V4.500H0Z" fill="#111"/></svg>
<svg class="a" style="left:8px;top:287px;" width="17" height="17" viewBox="0 0 17 17"><path d="M1.500,3.500C3,0,7.500,0.200,7.800,3.800C8,7,4.800,9.500,5.500,12.500C6.200,15.600,11.500,16.400,14,13C15.400,10.800,14.500,8.300,12.300,8" fill="none" stroke="#2e2e2e" stroke-width="1.900" stroke-linecap="round"/></svg>
<svg class="a" style="left:8px;top:316px;" width="16" height="16" viewBox="0 0 16 16"><rect x="0.700" y="0.700" width="14.400" height="14.400" fill="none" stroke="#2e2e2e" stroke-width="1.300"/></svg>
<svg class="a" style="left:22.5px;top:330.0px;" width="4.5" height="4.5" viewBox="0 0 4.5 4.5"><path d="M4.500,0V4.500H0Z" fill="#111"/></svg>
<svg class="a" style="left:7px;top:345px;" width="18" height="18" viewBox="0 0 18 18"><circle cx="8.800" cy="8.800" r="7.900" fill="none" stroke="#2e2e2e" stroke-width="1.300"/></svg>
<svg class="a" style="left:22.5px;top:359.5px;" width="4.5" height="4.5" viewBox="0 0 4.5 4.5"><path d="M4.500,0V4.500H0Z" fill="#111"/></svg>
<svg class="a" style="left:7px;top:374px;" width="18" height="17" viewBox="0 0 18 17"><path d="M4.600,0.800H12.800L17,8.300L12.800,15.800H4.600L0.600,8.300Z" fill="none" stroke="#2e2e2e" stroke-width="1.300"/></svg>
<svg class="a" style="left:22.5px;top:388.0px;" width="4.5" height="4.5" viewBox="0 0 4.5 4.5"><path d="M4.500,0V4.500H0Z" fill="#111"/></svg>
<div class="a" style="left:4px;top:400px;width:25px;height:1px;background:#dcdcdc;"></div>
<svg class="a" style="left:8px;top:411px;" width="16" height="16" viewBox="0 0 16 16"><path d="M0.600,15.500L7,0.600H8.700L15.200,15.500M3.200,10.500H12.600" fill="none" stroke="#2e2e2e" stroke-width="1.700"/></svg>
<svg class="a" style="left:22.5px;top:425.0px;" width="4.5" height="4.5" viewBox="0 0 4.5 4.5"><path d="M4.500,0V4.500H0Z" fill="#111"/></svg>
<div class="a" style="left:4px;top:437px;width:25px;height:1px;background:#dcdcdc;"></div>
<svg class="a" style="left:8px;top:448px;" width="17" height="16" viewBox="0 0 17 16"><path d="M2.500,13.500L13.500,2" stroke="#2e2e2e" stroke-width="1.200"/><path d="M0.300,11.200L4.700,15.700M11.200,0.300L15.800,3.800" stroke="#2e2e2e" stroke-width="1.200"/></svg>
<svg class="a" style="left:22.5px;top:462.0px;" width="4.5" height="4.5" viewBox="0 0 4.5 4.5"><path d="M4.500,0V4.500H0Z" fill="#111"/></svg>
<svg class="a" style="left:7px;top:476px;" width="18" height="18" viewBox="0 0 18 18"><path d="M2.800,3L14.200,12.600" fill="none" stroke="#2e2e2e" stroke-width="1.500"/><rect x="0.600" y="0.600" width="4.200" height="4.200" fill="#e87a2c" stroke="#5a2a08" stroke-width="0.900"/><rect x="11.800" y="10.400" width="4.200" height="4.200" fill="#e87a2c" stroke="#5a2a08" stroke-width="0.900"/></svg>
<svg class="a" style="left:22.5px;top:490.5px;" width="4.5" height="4.5" viewBox="0 0 4.5 4.5"><path d="M4.500,0V4.500H0Z" fill="#111"/></svg>
<div class="a" style="left:4px;top:503px;width:25px;height:1px;background:#dcdcdc;"></div>
<svg class="a" style="left:8px;top:514px;" width="17" height="17" viewBox="0 0 17 17"><path d="M4,14.200H15.500V3.500" fill="none" stroke="#1a1a1a" stroke-width="2.200"/><rect x="0.700" y="0.700" width="12" height="11.600" fill="#f3f3f3" stroke="#2e2e2e" stroke-width="1.300"/></svg>
<svg class="a" style="left:22.5px;top:528.0px;" width="4.5" height="4.5" viewBox="0 0 4.5 4.5"><path d="M4.500,0V4.500H0Z" fill="#111"/></svg>
<svg class="a" style="left:8px;top:543px;" width="16" height="16" viewBox="0 0 16 16"><rect x="0" y="0" width="16" height="16" fill="#222"/><rect x="1.0" y="3.8" width="2.800" height="2.800" fill="#f3f3f3"/><rect x="1.0" y="9.399999999999999" width="2.800" height="2.800" fill="#f3f3f3"/><rect x="3.8" y="1.0" width="2.800" height="2.800" fill="#f3f3f3"/><rect x="3.8" y="6.6" width="2.800" height="2.800" fill="#f3f3f3"/><rect x="3.8" y="12.2" width="2.800" height="2.800" fill="#f3f3f3"/><rect x="6.6" y="3.8" width="2.800" height="2.800" fill="#f3f3f3"/><rect x="6.6" y="9.399999999999999" width="2.800" height="2.800" fill="#f3f3f3"/><rect x="9.399999999999999" y="1.0" width="2.800" height="2.800" fill="#f3f3f3"/><rect x="9.399999999999999" y="6.6" width="2.800" height="2.800" fill="#f3f3f3"/><rect x="9.399999999999999" y="12.2" width="2.800" height="2.800" fill="#f3f3f3"/><rect x="12.2" y="3.8" width="2.800" height="2.800" fill="#f3f3f3"/><rect x="12.2" y="9.399999999999999" width="2.800" height="2.800" fill="#f3f3f3"/></svg>
<div class="a" style="left:4px;top:568px;width:25px;height:1px;background:#dcdcdc;"></div>
<svg class="a" style="left:8px;top:580px;" width="16" height="16" viewBox="0 0 16 16"><path d="M1.200,14.800L2,12.200L9.200,5L11,6.800L3.800,14Z" fill="#f3f3f3" stroke="#888" stroke-width="1"/><path d="M1,15L1.800,12.500L4.500,15.200Z" fill="#d2552a" transform="translate(0,-0.800)"/><path d="M2.200,13.800L5,11" stroke="#d2552a" stroke-width="1.600"/><path d="M8.200,4.200L11.800,7.800" stroke="#2a2a2a" stroke-width="2.200"/><path d="M10.200,5.800L13.500,2.500" stroke="#2a2a2a" stroke-width="3.600" stroke-linecap="round"/></svg>
<svg class="a" style="left:22.5px;top:594.5px;" width="4.5" height="4.5" viewBox="0 0 4.5 4.5"><path d="M4.500,0V4.500H0Z" fill="#111"/></svg>
<svg class="a" style="left:8px;top:609px;" width="18" height="19" viewBox="0 0 18 19"><path d="M7.500,1.800L13.800,8.300L7.500,14.800L1.200,8.300Z" fill="#f4f4f4" stroke="#2e2e2e" stroke-width="1.200"/><path d="M8,1.300L14.300,7.700" stroke="#222" stroke-width="2.600"/><path d="M3.600,8.800H11.400L7.500,12.600Z" fill="#e8212b"/><path d="M15.200,10V17.500H11.200C13.500,15.500,13.200,12.500,15.200,10Z" fill="#e8212b"/></svg>
<svg class="a" style="left:22.5px;top:623.5px;" width="4.5" height="4.5" viewBox="0 0 4.5 4.5"><path d="M4.500,0V4.500H0Z" fill="#111"/></svg>
<svg class="a" style="left:8px;top:638px;" width="17" height="17" viewBox="0 0 17 17"><path d="M8.300,1L13,5.700L8.300,10.400L3.600,5.700Z" fill="#f4f4f4" stroke="#2e2e2e" stroke-width="1.100"/><path d="M8.600,0.600L13.400,5.300" stroke="#222" stroke-width="2"/><path d="M6,6.300H10.600L8.300,8.600Z" fill="#f0c8a8"/><rect x="0.500" y="12.300" width="15.500" height="3.400" fill="#fff" stroke="#2e2e2e" stroke-width="0.900"/><rect x="8.500" y="12.800" width="7" height="2.400" fill="#e0662a"/></svg>
<div class="a" style="left:4px;top:664px;width:25px;height:1px;background:#dcdcdc;"></div>
<svg class="a" style="left:7px;top:679px;" width="18" height="18" viewBox="0 0 18 18"><circle cx="9" cy="9" r="7.800" fill="none" stroke="#c6c6c6" stroke-width="1.300"/><path d="M3.800,9H14.200M9,3.800V14.200" stroke="#c6c6c6" stroke-width="1.600"/></svg>
<div class="a" style="left:31px;top:118px;width:1px;height:583px;background:#e2e2e2;"></div>
<svg class="a" style="left:1057px;top:162px;" width="8" height="5.6" viewBox="0 0 8 5.6"><path d="M0.600,4.56L4.0,0.800L7.4,4.56" fill="none" stroke="#333" stroke-width="1.8"/></svg>
<svg class="a" style="left:1057px;top:650px;" width="8" height="5.6" viewBox="0 0 8 5.6"><path d="M0.600,0.800L4.0,4.56L7.4,0.800" fill="none" stroke="#333" stroke-width="1.8"/></svg>
<svg class="a" style="left:568px;top:667px;" width="5.6" height="8" viewBox="0 0 5.6 8"><path d="M4.56,0.600L0.800,4.0L4.56,7.4" fill="none" stroke="#333" stroke-width="1.8"/></svg>
<svg class="a" style="left:1041px;top:667px;" width="5.6" height="8" viewBox="0 0 5.6 8"><path d="M0.800,0.600L4.56,4.0L0.800,7.4" fill="none" stroke="#333" stroke-width="1.8"/></svg>
<svg class="a" style="left:1055px;top:665px;" width="12" height="12" viewBox="0 0 12 12"><circle cx="5" cy="5" r="4.300" fill="#fff" stroke="#444" stroke-width="1"/><path d="M8,8L11.500,11.500" stroke="#444" stroke-width="1.600"/><path d="M3,5h4M5,3v4" stroke="#666" stroke-width="0.800" stroke-dasharray="1,1"/></svg>
<svg class="a" style="left:552px;top:665px;" width="6" height="12" viewBox="0 0 6 12"><rect x="0" y="0" width="1" height="1" fill="#aaa"/><rect x="0" y="0" width="1" height="1" fill="#aaa"/><rect x="2" y="2" width="1" height="1" fill="#aaa"/><rect x="2" y="2" width="1" height="1" fill="#aaa"/><rect x="0" y="4" width="1" height="1" fill="#aaa"/><rect x="0" y="4" width="1" height="1" fill="#aaa"/><rect x="2" y="6" width="1" height="1" fill="#aaa"/><rect x="2" y="6" width="1" height="1" fill="#aaa"/><rect x="0" y="8" width="1" height="1" fill="#aaa"/><rect x="0" y="8" width="1" height="1" fill="#aaa"/><rect x="2" y="10" width="1" height="1" fill="#aaa"/><rect x="2" y="10" width="1" height="1" fill="#aaa"/></svg>
<svg class="a" style="left:53px;top:666px;" width="9" height="10" viewBox="0 0 9 10"><path d="M3,0.500H8.500V9.500H0.500V3Z" fill="#f3f3f3" stroke="#555" stroke-width="1"/><path d="M0.500,3H3V0.500" fill="none" stroke="#555" stroke-width="0.800"/><path d="M2.500,6H6.500M4.500,4V8" stroke="#333" stroke-width="1"/></svg>
<svg class="a" style="left:175px;top:666px;" width="9" height="10" viewBox="0 0 9 10"><path d="M3,0.500H8.500V9.500H0.500V3Z" fill="#f3f3f3" stroke="#555" stroke-width="1"/><path d="M0.500,3H3V0.500" fill="none" stroke="#555" stroke-width="0.800"/><path d="M2.500,6H6.500M4.500,4V8" stroke="#333" stroke-width="1"/></svg>
<svg class="a" style="left:69px;top:667px;" width="10" height="9" viewBox="0 0 10 9"><rect x="0" y="0" width="1.600" height="9" fill="#b4b4b4"/><path d="M9.500,0V9L2.500,4.500Z" fill="#b4b4b4"/></svg>
<svg class="a" style="left:86px;top:667px;" width="8" height="9" viewBox="0 0 8 9"><path d="M8,0V9L0.500,4.500Z" fill="#b4b4b4"/></svg>
<svg class="a" style="left:144px;top:667px;" width="8" height="9" viewBox="0 0 8 9"><path d="M0,0V9L7.500,4.500Z" fill="#b4b4b4"/></svg>
<svg class="a" style="left:159px;top:667px;" width="10" height="9" viewBox="0 0 10 9"><rect x="8" y="0" width="1.600" height="9" fill="#b4b4b4"/><path d="M0,0V9L7,4.500Z" fill="#b4b4b4"/></svg>
<svg class="a" style="left:196px;top:662px;" width="62" height="17" viewBox="0 0 62 17"><path d="M0.500,0.500L5.500,16.500H56.500L61.500,0.500" fill="#ffffff" stroke="#7a7a7a" stroke-width="1"/><path d="M1,0.500H61" stroke="#fff" stroke-width="1.200"/></svg>
<svg class="a" style="left:34px;top:682px;" width="7" height="17" viewBox="0 0 7 17"><rect x="0" y="0" width="1" height="1" fill="#b0b0b0"/><rect x="4" y="0" width="1" height="1" fill="#b0b0b0"/><rect x="2" y="2" width="1" height="1" fill="#b0b0b0"/><rect x="6" y="2" width="1" height="1" fill="#b0b0b0"/><rect x="0" y="4" width="1" height="1" fill="#b0b0b0"/><rect x="4" y="4" width="1" height="1" fill="#b0b0b0"/><rect x="2" y="6" width="1" height="1" fill="#b0b0b0"/><rect x="6" y="6" width="1" height="1" fill="#b0b0b0"/><rect x="0" y="8" width="1" height="1" fill="#b0b0b0"/><rect x="4" y="8" width="1" height="1" fill="#b0b0b0"/><rect x="2" y="10" width="1" height="1" fill="#b0b0b0"/><rect x="6" y="10" width="1" height="1" fill="#b0b0b0"/><rect x="0" y="12" width="1" height="1" fill="#b0b0b0"/><rect x="4" y="12" width="1" height="1" fill="#b0b0b0"/><rect x="2" y="14" width="1" height="1" fill="#b0b0b0"/><rect x="6" y="14" width="1" height="1" fill="#b0b0b0"/><rect x="0" y="16" width="1" height="1" fill="#b0b0b0"/><rect x="4" y="16" width="1" height="1" fill="#b0b0b0"/></svg>
<svg class="a" style="left:47px;top:686px;" width="4" height="8" viewBox="0 0 4 8"><path d="M0,0V8L4,4.0Z" fill="#1a1a1a"/></svg>
<svg class="a" style="left:62px;top:683px;" width="14" height="14" viewBox="0 0 16 16"><path d="M1.200,14.800L2,12.200L9.200,5L11,6.800L3.800,14Z" fill="#f3f3f3" stroke="#888" stroke-width="1"/><path d="M1,15L1.800,12.500L4.500,15.200Z" fill="#d2552a" transform="translate(0,-0.800)"/><path d="M2.200,13.800L5,11" stroke="#d2552a" stroke-width="1.600"/><path d="M8.200,4.200L11.800,7.800" stroke="#2a2a2a" stroke-width="2.200"/><path d="M10.200,5.800L13.500,2.500" stroke="#2a2a2a" stroke-width="3.600" stroke-linecap="round"/></svg>
<svg class="a" style="left:83px;top:685px;" width="6.1" height="9" viewBox="0 0 6.1 9"><path d="M5.13,0.600L0.800,4.5L5.13,8.4" fill="none" stroke="#cfcfcf" stroke-width="1.8"/></svg>
<svg class="a" style="left:96px;top:681px;" width="35" height="18" viewBox="0 0 35 18"><rect x="0.500" y="0.500" width="17" height="17" fill="#fff" stroke="#333" stroke-width="1"/><path d="M0.500,0.500L17.500,17.500M17.500,0.500L0.500,17.500" stroke="#222" stroke-width="1"/><rect x="17.500" y="0.500" width="17" height="17" fill="#ec6b72" stroke="#7a3a3e" stroke-width="1"/></svg>
<svg class="a" style="left:1308px;top:684px;" width="6.7" height="10" viewBox="0 0 6.7 10"><path d="M0.800,0.600L5.699999999999999,5.0L0.800,9.4" fill="none" stroke="#d0d0d0" stroke-width="1.8"/></svg>
<svg class="a" style="left:1325px;top:685px;" width="10" height="9" viewBox="0 0 10 9"><path d="M0.800,0.600L4.200,4.500L0.800,8.400M5.300,0.600L8.700,4.500L5.300,8.400" fill="none" stroke="#c4c4c4" stroke-width="1.200"/></svg>
<svg class="a" style="left:104px;top:715px;" width="4" height="8" viewBox="0 0 4 8"><path d="M0,0V8L4,4.0Z" fill="#1a1a1a"/></svg>
<svg class="a" style="left:943.5px;top:711px;" width="17" height="16" viewBox="0 0 17 16"><path d="M7.500,0.900L14.200,7.600L7.500,14.500L0.700,7.600Z" fill="#f6f6f6" stroke="#2e2e2e" stroke-width="1.200"/><path d="M7.900,0.500L14.600,7.200" stroke="#222" stroke-width="2.400"/><path d="M3.900,8.300H11L7.500,11.800Z" fill="#e8212b"/><path d="M15.600,9.800V15.600H11.800Z" fill="#e8212b"/></svg>
<svg class="a" style="left:961px;top:708px;" width="22" height="22" viewBox="0 0 22 22"><rect x="0.900" y="0.900" width="20.600" height="20" fill="#fff" stroke="#808080" stroke-width="1"/><path d="M1,1L21.400,20.800M21.400,1L1,20.800" stroke="#444" stroke-width="1.800"/></svg>
<div class="a" style="left:1140px;top:708px;width:1px;height:22px;background:#d8d8d8;"></div>
<svg class="a" style="left:1156px;top:711px;" width="9" height="17" viewBox="0 0 9 17"><path d="M4.500,0.500C2.500,3,0.800,6,0.800,9L2.500,12.500H6.500L8.200,9C8.200,6,6.500,3,4.500,0.500Z" fill="#f3f3f3" stroke="#2e2e2e" stroke-width="1"/><path d="M4.500,1.500V8" stroke="#2e2e2e" stroke-width="0.900"/><rect x="2.300" y="12.600" width="4.400" height="3.600" fill="#f3f3f3" stroke="#2e2e2e" stroke-width="1"/></svg>
<div class="a" style="left:1169px;top:709px;width:21px;height:21px;background:#231f20;"></div>
<svg class="a" style="left:1314px;top:124px;" width="9" height="8" viewBox="0 0 9 8"><path d="M0,0V8L4,4ZM4.500,0V8L8.500,4Z" fill="#c4c4c4"/></svg>
<svg class="a" style="left:1331px;top:123.5px;" width="9" height="9" viewBox="0 0 9 9"><path d="M0.500,0.500L8.500,8.500M8.500,0.500L0.500,8.500" stroke="#c0c0c0" stroke-width="1.400"/></svg>
<div class="a" style="left:1078px;top:146px;width:24px;height:24px;background:#ffffff;border:1px solid #c4c4c4;box-sizing:border-box;"></div>
<div class="a" style="left:1106px;top:146px;width:24px;height:24px;background:#ffffff;border:1px solid #c4c4c4;box-sizing:border-box;"></div>
<svg class="a" style="left:1082px;top:150px;" width="17" height="17" viewBox="0 0 17 17"><rect x="1.200" y="1.200" width="6.200" height="6.200" fill="none" stroke="#2e2e2e" stroke-width="1.200"/><rect x="0.29999999999999993" y="0.29999999999999993" width="1.800" height="1.800" fill="#2e2e2e"/><rect x="0.29999999999999993" y="6.5" width="1.800" height="1.800" fill="#2e2e2e"/><rect x="6.5" y="0.29999999999999993" width="1.800" height="1.800" fill="#2e2e2e"/><rect x="6.5" y="6.5" width="1.800" height="1.800" fill="#2e2e2e"/><path d="M7.800,9.200L5.600,11.800H7.600L5.600,14.600" fill="none" stroke="#2e2e2e" stroke-width="1.100"/><path d="M9.400,11.300H16M9.400,14.200H16" stroke="#2e2e2e" stroke-width="1.200"/></svg>
<svg class="a" style="left:1110px;top:150px;" width="18" height="17" viewBox="0 0 18 17"><path d="M0.600,0.800H6.500V7.800H2.800L0.600,5.800Z" fill="none" stroke="#2e2e2e" stroke-width="1.200"/><path d="M6.500,4.400H7.500M5.600,7.800V12H9.500M11.800,6.400V8.200" fill="none" stroke="#2e2e2e" stroke-width="1.200"/><path d="M9.500,8.500V15.200H15.200V6.500" fill="none" stroke="#2e2e2e" stroke-width="1.200"/><path d="M9.500,6.600L10,4.600L13.800,0.600L15.800,2.500L11.800,6.400Z" fill="#2e2e2e"/></svg>
<svg class="a" style="left:1138px;top:150px;" width="18" height="17" viewBox="0 0 18 17"><path d="M0.600,0.800H6.500V7.800H2.800L0.600,5.800Z" fill="none" stroke="#2e2e2e" stroke-width="1.200"/><path d="M6.500,4.400H7.500M5.600,7.800V12H9.500M11.800,6.400V8.200" fill="none" stroke="#2e2e2e" stroke-width="1.200"/><path d="M9.500,8.500V15.200H15.200V6.500" fill="none" stroke="#2e2e2e" stroke-width="1.200"/><ellipse cx="12.5" cy="2.8" rx="3.900" ry="2.200" fill="#fafafa" stroke="#333" stroke-width="0.9"/><ellipse cx="12.5" cy="2.8" rx="1.700" ry="1.100" fill="#333"/></svg>
<svg class="a" style="left:1308px;top:152px;" width="4" height="8" viewBox="0 0 4 8"><path d="M0,0V8L4,4.0Z" fill="#1a1a1a"/></svg>
<svg class="a" style="left:1085px;top:180px;" width="9" height="9" viewBox="0 0 9 9"><rect x="0.500" y="0.500" width="8" height="8" fill="#fff" stroke="#555" stroke-width="1"/><path d="M2.200,4.500H6.800" stroke="#333" stroke-width="1"/></svg>
<svg class="a" style="left:1104px;top:179px;" width="11" height="12" viewBox="0 0 11 12"><path d="M3.500,0.600H10.200V11.400H0.800V3.500Z" fill="#fff" stroke="#555" stroke-width="1.100"/></svg>
<svg class="a" style="left:1123px;top:198px;" width="12" height="10" viewBox="0 0 12 10"><path d="M0.400,5C2.500,0.900,9.500,0.900,11.600,5C9.500,9.100,2.500,9.100,0.400,5Z" fill="#fff" stroke="#444" stroke-width="1"/><circle cx="6" cy="5" r="2.200" fill="#2a2a2a"/></svg>
<svg class="a" style="left:1139px;top:196px;" width="13" height="12" viewBox="0 0 13 12"><path d="M3.800,6.500L4.600,0.800H8.800L9.200,6.500" fill="none" stroke="#e8212b" stroke-width="1"/><rect x="0.600" y="6.500" width="11.300" height="5" fill="none" stroke="#e8212b" stroke-width="1.100"/><circle cx="6.300" cy="6" r="5.600" fill="none" stroke="#e8212b" stroke-width="1"/><path d="M2.300,2L10.300,10" stroke="#e8212b" stroke-width="1"/><path d="M2,8.500H10.500" stroke="#e8212b" stroke-width="0.800"/></svg>
<svg class="a" style="left:1155px;top:197px;" width="11" height="12" viewBox="0 0 11 12"><path d="M2,6V2.500C2,0.300,6,0.300,6,2.500V4" fill="none" stroke="#111" stroke-width="1.300"/><rect x="1.500" y="6" width="9" height="6" fill="#111"/><rect x="5" y="8" width="2" height="2" fill="#fff"/></svg>
<div class="a" style="left:1169px;top:197px;width:16.5px;height:13px;background:#0a0af0;"></div>
<svg class="a" style="left:1104px;top:217px;" width="9" height="9" viewBox="0 0 9 9"><rect x="0.500" y="0.500" width="8" height="8" fill="#fff" stroke="#555" stroke-width="1"/><path d="M2.200,4.500H6.800" stroke="#333" stroke-width="1"/></svg>
<svg class="a" style="left:1123px;top:216px;" width="12" height="10" viewBox="0 0 12 10"><path d="M0.400,5C2.500,0.900,9.500,0.900,11.600,5C9.500,9.100,2.500,9.100,0.400,5Z" fill="#fff" stroke="#444" stroke-width="1"/><circle cx="6" cy="5" r="2.200" fill="#2a2a2a"/></svg>
<svg class="a" style="left:1139px;top:214px;" width="13" height="12" viewBox="0 0 13 12"><path d="M3.800,6.500L4.600,0.800H8.800L9.200,6.500" fill="none" stroke="#444" stroke-width="1"/><rect x="0.600" y="6.500" width="11.300" height="5" fill="none" stroke="#444" stroke-width="1.100"/><path d="M2,8.800H10.500" stroke="#444" stroke-width="0.800"/></svg>
<svg class="a" style="left:1155px;top:215px;" width="11" height="12" viewBox="0 0 11 12"><path d="M2,6V2.500C2,0.300,6,0.300,6,2.500V4" fill="none" stroke="#111" stroke-width="1.300"/><rect x="1.500" y="6" width="9" height="6" fill="#111"/><rect x="5" y="8" width="2" height="2" fill="#fff"/></svg>
<div class="a" style="left:1169px;top:215px;width:16.5px;height:13px;background:#231f20;"></div>
<svg class="a" style="left:1123px;top:235px;" width="9" height="9" viewBox="0 0 9 9"><rect x="0.500" y="0.500" width="8" height="8" fill="#fff" stroke="#555" stroke-width="1"/><path d="M2.200,4.500H6.800" stroke="#333" stroke-width="1"/><path d="M4.500,2.200V6.800" stroke="#333" stroke-width="1"/></svg>
<svg class="a" style="left:1141px;top:233px;" width="13" height="13" viewBox="0 0 13 13"><circle cx="6.500" cy="6.500" r="5.600" fill="#ec6b6e" stroke="#3a1a1a" stroke-width="1"/></svg>
<svg class="a" style="left:1141px;top:252px;" width="13" height="12" viewBox="0 0 13 12"><path d="M0.800,11.200L5.500,0.800H7.500L12.200,11.200H9.800L8.800,8.500H4.200L3.200,11.200Z" fill="#ec6b6e" stroke="#3a1a1a" stroke-width="0.900"/><path d="M5,6.600H8L6.500,3Z" fill="#fff" stroke="#3a1a1a" stroke-width="0.700"/></svg>
<svg class="a" style="left:1141px;top:269px;" width="13" height="13" viewBox="0 0 13 13"><path d="M1.500,1.500V11.500H11.500V6" fill="none" stroke="#555" stroke-width="1.100"/><path d="M1.500,1.500H5" stroke="#555" stroke-width="1.100"/><rect x="0.300" y="0.300" width="2.400" height="2.400" fill="#333"/><rect x="0.300" y="10.300" width="2.400" height="2.400" fill="#333"/><rect x="10.300" y="10.300" width="2.400" height="2.400" fill="#333"/><path d="M7,6L12,1M9,1H12V4" fill="none" stroke="#333" stroke-width="1.200"/></svg>
<svg class="a" style="left:1085px;top:288px;" width="9" height="9" viewBox="0 0 9 9"><rect x="0.500" y="0.500" width="8" height="8" fill="#fff" stroke="#555" stroke-width="1"/><path d="M2.200,4.500H6.800" stroke="#333" stroke-width="1"/></svg>
<svg class="a" style="left:1104px;top:287px;" width="11" height="12" viewBox="0 0 11 12"><path d="M3.500,0.600H10.200V11.400H0.800V3.500Z" fill="#fff" stroke="#555" stroke-width="1.100"/></svg>
<svg class="a" style="left:1123px;top:306px;" width="12" height="10" viewBox="0 0 12 10"><path d="M0.400,5C2.500,0.900,9.500,0.900,11.600,5C9.500,9.100,2.500,9.100,0.400,5Z" fill="#fff" stroke="#444" stroke-width="1"/><circle cx="6" cy="5" r="2.200" fill="#2a2a2a"/></svg>
<svg class="a" style="left:1139px;top:304px;" width="13" height="12" viewBox="0 0 13 12"><path d="M3.800,6.500L4.600,0.800H8.800L9.200,6.500" fill="none" stroke="#e8212b" stroke-width="1"/><rect x="0.600" y="6.500" width="11.300" height="5" fill="none" stroke="#e8212b" stroke-width="1.100"/><circle cx="6.300" cy="6" r="5.600" fill="none" stroke="#e8212b" stroke-width="1"/><path d="M2.300,2L10.300,10" stroke="#e8212b" stroke-width="1"/><path d="M2,8.500H10.500" stroke="#e8212b" stroke-width="0.800"/></svg>
<svg class="a" style="left:1155px;top:305px;" width="11" height="12" viewBox="0 0 11 12"><path d="M2,6V2.500C2,0.300,6,0.300,6,2.500V4" fill="none" stroke="#111" stroke-width="1.300"/><rect x="1.500" y="6" width="9" height="6" fill="#111"/><rect x="5" y="8" width="2" height="2" fill="#fff"/></svg>
<div class="a" style="left:1169px;top:305px;width:16.5px;height:13px;background:#0a0af0;"></div>
<svg class="a" style="left:1123px;top:324px;" width="12" height="10" viewBox="0 0 12 10"><path d="M0.400,5C2.500,0.900,9.500,0.900,11.600,5C9.500,9.100,2.500,9.100,0.400,5Z" fill="#fff" stroke="#444" stroke-width="1"/><circle cx="6" cy="5" r="2.200" fill="#2a2a2a"/></svg>
<svg class="a" style="left:1139px;top:322px;" width="13" height="12" viewBox="0 0 13 12"><path d="M3.800,6.500L4.600,0.800H8.800L9.200,6.500" fill="none" stroke="#e8212b" stroke-width="1"/><rect x="0.600" y="6.500" width="11.300" height="5" fill="none" stroke="#e8212b" stroke-width="1.100"/><circle cx="6.300" cy="6" r="5.600" fill="none" stroke="#e8212b" stroke-width="1"/><path d="M2.300,2L10.300,10" stroke="#e8212b" stroke-width="1"/><path d="M2,8.500H10.500" stroke="#e8212b" stroke-width="0.800"/></svg>
<svg class="a" style="left:1155px;top:323px;" width="11" height="12" viewBox="0 0 11 12"><path d="M2,6V2.500C2,0.300,6,0.300,6,2.500V4" fill="none" stroke="#111" stroke-width="1.300"/><rect x="1.500" y="6" width="9" height="6" fill="#111"/><rect x="5" y="8" width="2" height="2" fill="#fff"/></svg>
<div class="a" style="left:1169px;top:323px;width:16.5px;height:13px;background:#231f20;"></div>
<svg class="a" style="left:1123px;top:342px;" width="12" height="10" viewBox="0 0 12 10"><path d="M0.400,5C2.500,0.900,9.500,0.900,11.600,5C9.500,9.100,2.500,9.100,0.400,5Z" fill="#fff" stroke="#444" stroke-width="1"/><circle cx="6" cy="5" r="2.200" fill="#2a2a2a"/><circle cx="9.300" cy="2" r="2.300" fill="#e8212b"/><path d="M8,2H10.600" stroke="#fff" stroke-width="0.900"/></svg>
<svg class="a" style="left:1139px;top:340px;" width="13" height="12" viewBox="0 0 13 12"><path d="M3.800,6.500L4.600,0.800H8.800L9.200,6.500" fill="none" stroke="#e8212b" stroke-width="1"/><rect x="0.600" y="6.500" width="11.300" height="5" fill="none" stroke="#e8212b" stroke-width="1.100"/><circle cx="6.300" cy="6" r="5.600" fill="none" stroke="#e8212b" stroke-width="1"/><path d="M2.300,2L10.300,10" stroke="#e8212b" stroke-width="1"/><path d="M2,8.500H10.500" stroke="#e8212b" stroke-width="0.800"/></svg>
<svg class="a" style="left:1155px;top:341px;" width="11" height="12" viewBox="0 0 11 12"><path d="M4,6V2.500C4,0.300,8,0.300,8,2.500V6" fill="none" stroke="#111" stroke-width="1.300"/><rect x="1.500" y="6" width="9" height="6" fill="#111"/><rect x="5" y="8" width="2" height="2" fill="#fff"/></svg>
<div class="a" style="left:1169px;top:341px;width:16.5px;height:13px;background:#c0c0c0;"></div>
<svg class="a" style="left:1084px;top:630px;" width="6.1" height="9" viewBox="0 0 6.1 9"><path d="M5.13,0.600L0.800,4.5L5.13,8.4" fill="none" stroke="#333" stroke-width="1.8"/></svg>
<svg class="a" style="left:1308px;top:630px;" width="6.1" height="9" viewBox="0 0 6.1 9"><path d="M0.800,0.600L5.13,4.5L0.800,8.4" fill="none" stroke="#333" stroke-width="1.8"/></svg>
<svg class="a" style="left:1081px;top:652px;" width="17" height="17" viewBox="0 0 17 17"><path d="M8,2.500H0.800V13L3.500,16H10.500V9" fill="none" stroke="#2e2e2e" stroke-width="1.300"/><path d="M0.800,13H3.500V16" fill="none" stroke="#2e2e2e" stroke-width="1"/><rect x="9.500" y="0.300" width="7" height="7" fill="#0a9d4f"/><path d="M10.800,3.800h4.400M13,1.600v4.400" stroke="#fff" stroke-width="1.300"/></svg>
<svg class="a" style="left:1110px;top:652px;" width="17" height="17" viewBox="0 0 17 17"><path d="M6.500,1.200H0.800V7.500L2.500,9.500H6.500Z" fill="#f3f3f3" stroke="#2e2e2e" stroke-width="1.100"/><path d="M5,9.500V12.500H9M9,9V16H15.500V9" fill="none" stroke="#2e2e2e" stroke-width="1.100"/><text x="2.300" y="7.500" font-size="6" fill="#2e2e2e" font-family="Liberation Sans">1</text><text x="6.300" y="12.200" font-size="5.500" fill="#2e2e2e" font-family="Liberation Sans">2</text><text x="10.500" y="15.300" font-size="6" fill="#2e2e2e" font-family="Liberation Sans">3</text><rect x="9.500" y="0.300" width="7" height="7" fill="#0a9d4f"/><path d="M10.800,3.800h4.400M13,1.600v4.400" stroke="#fff" stroke-width="1.300"/></svg>
<svg class="a" style="left:1295px;top:653px;" width="15" height="16" viewBox="0 0 15 16"><path d="M0.500,3.500H14.500M5,3V0.800H10V3" fill="none" stroke="#c8c8c8" stroke-width="1.500"/><path d="M1.800,5H13.200V15.500H1.800Z" fill="#c8c8c8"/><path d="M5.500,7V13.500M9.500,7V13.500" stroke="#f3f3f3" stroke-width="1.300"/></svg>
<svg class="a" style="left:1328px;top:141px;" width="16" height="16" viewBox="0 0 16 16"><path d="M4.400,0.400L8.700,4.500L4.400,8.700L0.300,4.500Z" fill="none" stroke="#1c1c1c" stroke-width="1.200"/><path d="M4.700,0.100L9,4.200" stroke="#1c1c1c" stroke-width="2"/><path d="M4.200,9.600L5.300,10.900L7.500,7.900M4.200,13L5.300,14.300L7.500,11.300" fill="none" stroke="#1c1c1c" stroke-width="1.100"/><path d="M8.700,10.500H15M8.700,13.600H15" stroke="#1c1c1c" stroke-width="1.200"/></svg>
<div class="a t" style="left:1344.500px;top:161.500px;font-size:12px;line-height:19px;height:19px;transform-origin:0 0;transform:rotate(90deg);letter-spacing:-0.300px;color:#111;">Object Properties</div>
<svg class="a" style="left:1328px;top:276px;" width="16" height="15" viewBox="0 0 16 15"><rect x="1" y="1" width="5.600" height="5.600" fill="none" stroke="#1c1c1c" stroke-width="1.200"/><rect x="0" y="0" width="2" height="2" fill="#1c1c1c"/><rect x="0" y="5.6" width="2" height="2" fill="#1c1c1c"/><rect x="5.6" y="0" width="2" height="2" fill="#1c1c1c"/><rect x="5.6" y="5.6" width="2" height="2" fill="#1c1c1c"/><circle cx="6.300" cy="10.300" r="0.800" fill="#1c1c1c"/><path d="M7.300,10.300H15M6,12.400H15M6,14.500H15" stroke="#1c1c1c" stroke-width="1.100"/></svg>
<div class="a t" style="left:1344.500px;top:296px;font-size:12px;line-height:19px;height:19px;transform-origin:0 0;transform:rotate(90deg);letter-spacing:0px;color:#111;">Object Manager</div>
<svg class="a" style="left:1326.7px;top:416.7px;" width="18" height="18" viewBox="0 0 18 18"><circle cx="9" cy="9" r="7.800" fill="none" stroke="#c6c6c6" stroke-width="1.300"/><path d="M3.800,9H14.200M9,3.800V14.200" stroke="#c6c6c6" stroke-width="1.600"/></svg>
<svg class="a" style="left:1348px;top:118px;" width="17" height="5" viewBox="0 0 17 5"><rect x="0" y="0" width="1" height="1" fill="#b8b8b8"/><rect x="1" y="2" width="1" height="1" fill="#b8b8b8"/><rect x="0" y="4" width="1" height="1" fill="#b8b8b8"/><rect x="2" y="0" width="1" height="1" fill="#b8b8b8"/><rect x="3" y="2" width="1" height="1" fill="#b8b8b8"/><rect x="2" y="4" width="1" height="1" fill="#b8b8b8"/><rect x="4" y="0" width="1" height="1" fill="#b8b8b8"/><rect x="5" y="2" width="1" height="1" fill="#b8b8b8"/><rect x="4" y="4" width="1" height="1" fill="#b8b8b8"/><rect x="6" y="0" width="1" height="1" fill="#b8b8b8"/><rect x="7" y="2" width="1" height="1" fill="#b8b8b8"/><rect x="6" y="4" width="1" height="1" fill="#b8b8b8"/><rect x="8" y="0" width="1" height="1" fill="#b8b8b8"/><rect x="9" y="2" width="1" height="1" fill="#b8b8b8"/><rect x="8" y="4" width="1" height="1" fill="#b8b8b8"/><rect x="10" y="0" width="1" height="1" fill="#b8b8b8"/><rect x="11" y="2" width="1" height="1" fill="#b8b8b8"/><rect x="10" y="4" width="1" height="1" fill="#b8b8b8"/><rect x="12" y="0" width="1" height="1" fill="#b8b8b8"/><rect x="13" y="2" width="1" height="1" fill="#b8b8b8"/><rect x="12" y="4" width="1" height="1" fill="#b8b8b8"/><rect x="14" y="0" width="1" height="1" fill="#b8b8b8"/><rect x="15" y="2" width="1" height="1" fill="#b8b8b8"/><rect x="14" y="4" width="1" height="1" fill="#b8b8b8"/><rect x="16" y="0" width="1" height="1" fill="#b8b8b8"/><rect x="17" y="2" width="1" height="1" fill="#b8b8b8"/><rect x="16" y="4" width="1" height="1" fill="#b8b8b8"/></svg>
<svg class="a" style="left:1354px;top:131px;" width="4" height="8" viewBox="0 0 4 8"><path d="M0,0V8L4,4.0Z" fill="#1a1a1a"/></svg>
<svg class="a" style="left:1349px;top:148px;" width="14" height="14" viewBox="0 0 16 16"><path d="M1.200,14.800L2,12.200L9.200,5L11,6.800L3.800,14Z" fill="#f3f3f3" stroke="#c8c8c8" stroke-width="1"/><path d="M1,15L1.800,12.500L4.500,15.200Z" fill="#d0d0d0" transform="translate(0,-0.800)"/><path d="M2.200,13.800L5,11" stroke="#d0d0d0" stroke-width="1.600"/><path d="M8.200,4.200L11.800,7.800" stroke="#c8c8c8" stroke-width="2.200"/><path d="M10.200,5.800L13.500,2.500" stroke="#c8c8c8" stroke-width="3.600" stroke-linecap="round"/></svg>
<svg class="a" style="left:1351px;top:169px;" width="10" height="6.7" viewBox="0 0 10 6.7"><path d="M0.600,5.699999999999999L5.0,0.800L9.4,5.699999999999999" fill="none" stroke="#d0d0d0" stroke-width="1.8"/></svg>
<svg class="a" style="left:1347px;top:182px;" width="19" height="17" viewBox="0 0 19 17"><path d="M1,1L18,16M18,1L1,16" stroke="#222" stroke-width="1.100"/></svg>
<svg class="a" style="left:1351px;top:663px;" width="10" height="6.7" viewBox="0 0 10 6.7"><path d="M0.600,0.800L5.0,5.699999999999999L9.4,0.800" fill="none" stroke="#c4c4c4" stroke-width="1.6"/></svg>
<svg class="a" style="left:1352px;top:680px;" width="10" height="9" viewBox="0 0 10 9"><path d="M0.800,0.600L4.200,4.500L0.800,8.400M5.300,0.600L8.700,4.500L5.300,8.400" fill="none" stroke="#c0c0c0" stroke-width="1.200"/></svg>
<span class="a t" id="t0" style="left:24px;top:4px;font-size:12px;line-height:14px;color:#000;letter-spacing:-0.047px;">CorelDRAW Home &amp; Student 2018 - Untitled-1*</span>
<span class="a t" id="t1" style="left:9px;top:25px;font-size:12px;line-height:14px;color:#000;letter-spacing:-0.388px;"><u>F</u>ile</span>
<span class="a t" id="t2" style="left:46.3px;top:25px;font-size:12px;line-height:14px;color:#000;letter-spacing:-0.429px;"><u>E</u>dit</span>
<span class="a t" id="t3" style="left:85px;top:25px;font-size:12px;line-height:14px;color:#000;letter-spacing:-0.375px;"><u>V</u>iew</span>
<span class="a t" id="t4" style="left:129px;top:25px;font-size:12px;line-height:14px;color:#000;letter-spacing:-0.099px;"><u>L</u>ayout</span>
<span class="a t" id="t5" style="left:184px;top:25px;font-size:12px;line-height:14px;color:#000;letter-spacing:0.018px;">Ob<u>j</u>ect</span>
<span class="a t" id="t6" style="left:238px;top:25px;font-size:12px;line-height:14px;color:#000;letter-spacing:-0.305px;">Effe<u>c</u>ts</span>
<span class="a t" id="t7" style="left:291.8px;top:25px;font-size:12px;line-height:14px;color:#000;letter-spacing:-0.101px;"><u>B</u>itmaps</span>
<span class="a t" id="t8" style="left:355.8px;top:25px;font-size:12px;line-height:14px;color:#000;transform:scaleX(0.9078);transform-origin:0 0;">Te<u>x</u>t</span>
<span class="a t" id="t9" style="left:396px;top:25px;font-size:12px;line-height:14px;color:#000;letter-spacing:-0.419px;"><u>T</u>able</span>
<span class="a t" id="t10" style="left:443.8px;top:25px;font-size:12px;line-height:14px;color:#000;transform:scaleX(0.9168);transform-origin:0 0;">T<u>o</u>ols</span>
<span class="a t" id="t11" style="left:488.8px;top:25px;font-size:12px;line-height:14px;color:#000;letter-spacing:0.184px;"><u>W</u>indow</span>
<span class="a t" id="t12" style="left:552px;top:25px;font-size:12px;line-height:14px;color:#000;letter-spacing:-0.196px;"><u>H</u>elp</span>
<span class="a t" id="t13" style="left:474px;top:52px;font-size:12px;line-height:14px;color:#000;transform:scaleX(0.8794);transform-origin:0 0;">100%</span>
<span class="a t" id="t14" style="left:725.6px;top:52px;font-size:12px;line-height:14px;color:#000;transform:scaleX(0.9215);transform-origin:0 0;">Snap <u>T</u>o</span>
<span class="a t" id="t15" style="left:865.5px;top:52px;font-size:12px;line-height:14px;color:#000;letter-spacing:-0.214px;">Launch</span>
<span class="a t" id="t16" style="left:8.5px;top:90px;font-size:12px;line-height:14px;color:#000;letter-spacing:-0.062px;">Custom</span>
<span class="a t" id="t17" style="left:191px;top:82px;font-size:12px;line-height:14px;color:#000;transform:scaleX(0.9020);transform-origin:0 0;">500 px</span>
<span class="a t" id="t18" style="left:191px;top:98px;font-size:12px;line-height:14px;color:#000;transform:scaleX(0.9020);transform-origin:0 0;">500 px</span>
<span class="a t" id="t19" style="left:430.6px;top:90px;font-size:12px;line-height:14px;color:#000;letter-spacing:-0.416px;">Units:</span>
<span class="a t" id="t20" style="left:467px;top:90px;font-size:12px;line-height:14px;color:#000;letter-spacing:-0.307px;">pixels</span>
<span class="a t" id="t21" style="left:593.8px;top:90px;font-size:12px;line-height:14px;color:#000;transform:scaleX(0.9060);transform-origin:0 0;">10 px</span>
<span class="a t" id="t22" style="left:703.7px;top:82px;font-size:12px;line-height:14px;color:#000;transform:scaleX(0.8958);transform-origin:0 0;">10 px</span>
<span class="a t" id="t23" style="left:703.7px;top:98px;font-size:12px;line-height:14px;color:#000;transform:scaleX(0.8958);transform-origin:0 0;">10 px</span>
<span class="a t" id="t24" style="left:436px;top:50.5px;font-size:8.5px;line-height:10px;color:#2a2a2a;letter-spacing:-0.200px;">PDF</span>
<span class="a t" id="t25" style="left:55.5px;top:121px;font-size:12px;line-height:14px;color:#000;letter-spacing:0.083px;">Untitled-1*</span>
<span class="a t" id="t26" style="left:75.25px;top:140px;font-size:9px;line-height:10px;color:#8a8a8a;letter-spacing:-0.212px;">300</span>
<span class="a t" id="t27" style="left:175.25px;top:140px;font-size:9px;line-height:10px;color:#8a8a8a;letter-spacing:-0.212px;">200</span>
<span class="a t" id="t28" style="left:275.25px;top:140px;font-size:9px;line-height:10px;color:#8a8a8a;letter-spacing:-0.212px;">100</span>
<span class="a t" id="t29" style="left:380.0px;top:140px;font-size:9px;line-height:10px;color:#8a8a8a;letter-spacing:-0.016px;">0</span>
<span class="a t" id="t30" style="left:475.25px;top:140px;font-size:9px;line-height:10px;color:#8a8a8a;letter-spacing:-0.212px;">100</span>
<span class="a t" id="t31" style="left:575.25px;top:140px;font-size:9px;line-height:10px;color:#8a8a8a;letter-spacing:-0.212px;">200</span>
<span class="a t" id="t32" style="left:675.25px;top:140px;font-size:9px;line-height:10px;color:#8a8a8a;letter-spacing:-0.212px;">300</span>
<span class="a t" id="t33" style="left:775.25px;top:140px;font-size:9px;line-height:10px;color:#8a8a8a;letter-spacing:-0.212px;">400</span>
<span class="a t" id="t34" style="left:875.25px;top:140px;font-size:9px;line-height:10px;color:#8a8a8a;letter-spacing:-0.212px;">500</span>
<span class="a t" id="t35" style="left:975.25px;top:140px;font-size:9px;line-height:10px;color:#8a8a8a;letter-spacing:-0.212px;">600</span>
<span class="a t" id="t36" style="left:1042.5px;top:140px;font-size:9px;line-height:10px;color:#8a8a8a;letter-spacing:0.088px;">pixels</span>
<span class="a t" id="t37" style="left:101.7px;top:664px;font-size:12px;line-height:14px;color:#000;letter-spacing:-0.427px;">1  of  1</span>
<span class="a t" id="t38" style="left:208.4px;top:663px;font-size:12px;line-height:14px;color:#000;transform:scaleX(0.8910);transform-origin:0 0;">Page 1</span>
<span class="a t" id="t39" style="left:7px;top:712.5px;font-size:12px;line-height:14px;color:#000;letter-spacing:-0.428px;">( 112   , 136    )</span>
<span class="a t" id="t40" style="left:987px;top:712px;font-size:12px;line-height:14px;color:#000;letter-spacing:0.089px;">None</span>
<span class="a t" id="t41" style="left:1194.5px;top:712px;font-size:12px;line-height:14px;color:#000;letter-spacing:-0.446px;">C:0 M:0 Y:0 K:100  1 px</span>
<span class="a t" id="t42" style="left:1077px;top:120.5px;font-size:12px;line-height:14px;color:#000;letter-spacing:-0.103px;">Object Manager</span>
<span class="a t" id="t43" style="left:1172px;top:143px;font-size:12px;line-height:14px;color:#000;transform:scaleX(0.8936);transform-origin:0 0;">Page 1</span>
<span class="a t" id="t44" style="left:1172px;top:158px;font-size:12px;line-height:14px;color:#000;transform:scaleX(0.8893);transform-origin:0 0;">Layer 1</span>
<span class="a t" id="t45" style="left:1121px;top:178px;font-size:12px;line-height:14px;color:#000;font-weight:bold;transform:scaleX(0.9043);transform-origin:0 0;">Page 1</span>
<span class="a t" id="t46" style="left:1192px;top:196px;font-size:12px;line-height:14px;color:#000;font-style:italic;letter-spacing:-0.442px;">Guides</span>
<span class="a t" id="t47" style="left:1192px;top:214px;font-size:12px;line-height:14px;color:#e0202a;font-weight:bold;transform:scaleX(0.9207);transform-origin:0 0;">Layer 1</span>
<span class="a t" id="t48" style="left:1158.7px;top:232px;font-size:12px;line-height:14px;color:#000;letter-spacing:-0.356px;width:159.3px;overflow:hidden;">Ellipse - Fill: C2 M71 Y47 K0, Outline: None</span>
<span class="a t" id="t49" style="left:1158.7px;top:250px;font-size:12px;line-height:14px;color:#000;letter-spacing:-0.149px;">Artistic Text: Arial (Bold) (ENU)</span>
<span class="a t" id="t50" style="left:1158.7px;top:268px;font-size:12px;line-height:14px;color:#000;letter-spacing:-0.308px;">PS Tiff Save As.tif (CMYK)</span>
<span class="a t" id="t51" style="left:1120px;top:286px;font-size:12px;line-height:14px;color:#000;font-weight:bold;letter-spacing:-0.162px;">Master Page</span>
<span class="a t" id="t52" style="left:1192px;top:304px;font-size:12px;line-height:14px;color:#2a9fd0;font-style:italic;letter-spacing:-0.137px;">Guides (all pages)</span>
<span class="a t" id="t53" style="left:1192px;top:322px;font-size:12px;line-height:14px;color:#2a9fd0;font-style:italic;letter-spacing:-0.312px;">Desktop</span>
<span class="a t" id="t54" style="left:1192px;top:340px;font-size:12px;line-height:14px;color:#2a9fd0;font-style:italic;letter-spacing:-0.216px;">Document Grid</span>
<span class="a t" id="t55" style="left:492px;top:271px;font-size:48px;line-height:53px;color:#ec6b74;font-weight:bold;letter-spacing:0.067px;">White Color</span>
</body></html>
